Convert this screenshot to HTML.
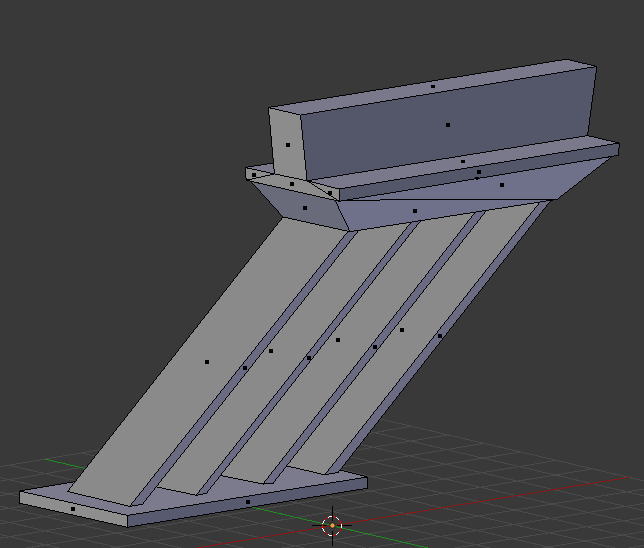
<!DOCTYPE html>
<html><head><meta charset="utf-8"><title>Blender viewport</title>
<style>
html,body{margin:0;padding:0;background:#393939;overflow:hidden;font-family:"Liberation Sans",sans-serif;}
svg{display:block}
</style></head><body>
<svg width="644" height="548" viewBox="0 0 644 548" shape-rendering="crispEdges">
<rect width="644" height="548" fill="#393939"/>
<g stroke-width="1" fill="none">
<line x1="-239.7" y1="507.5" x2="326.5" y2="637.3" stroke="#4a4a4a"/>
<line x1="-239.7" y1="507.5" x2="338.6" y2="409.2" stroke="#4a4a4a"/>
<line x1="-204.6" y1="501.5" x2="362.2" y2="631.7" stroke="#4a4a4a"/>
<line x1="-203.9" y1="515.7" x2="375.1" y2="417.8" stroke="#4a4a4a"/>
<line x1="-169.4" y1="495.5" x2="398.0" y2="626.0" stroke="#4a4a4a"/>
<line x1="-168.1" y1="523.9" x2="411.5" y2="426.3" stroke="#4a4a4a"/>
<line x1="-134.0" y1="489.5" x2="434.0" y2="620.3" stroke="#4a4a4a"/>
<line x1="-132.4" y1="532.1" x2="447.8" y2="434.8" stroke="#4a4a4a"/>
<line x1="-98.5" y1="483.5" x2="470.1" y2="614.6" stroke="#4a4a4a"/>
<line x1="-96.8" y1="540.2" x2="484.1" y2="443.4" stroke="#4a4a4a"/>
<line x1="-62.9" y1="477.4" x2="506.4" y2="608.9" stroke="#4a4a4a"/>
<line x1="-61.2" y1="548.4" x2="520.3" y2="451.9" stroke="#4a4a4a"/>
<line x1="-27.1" y1="471.3" x2="542.8" y2="603.2" stroke="#4a4a4a"/>
<line x1="-25.6" y1="556.6" x2="556.5" y2="460.4" stroke="#4a4a4a"/>
<line x1="8.8" y1="465.2" x2="579.3" y2="597.4" stroke="#4a4a4a"/>
<line x1="9.9" y1="564.7" x2="592.6" y2="468.8" stroke="#4a4a4a"/>
<line x1="81.1" y1="452.9" x2="652.8" y2="585.8" stroke="#4a4a4a"/>
<line x1="80.6" y1="580.9" x2="664.6" y2="485.7" stroke="#4a4a4a"/>
<line x1="117.5" y1="446.8" x2="689.8" y2="579.9" stroke="#4a4a4a"/>
<line x1="115.9" y1="589.0" x2="700.5" y2="494.2" stroke="#4a4a4a"/>
<line x1="154.0" y1="440.6" x2="726.9" y2="574.1" stroke="#4a4a4a"/>
<line x1="151.2" y1="597.1" x2="736.3" y2="502.6" stroke="#4a4a4a"/>
<line x1="190.6" y1="434.3" x2="764.1" y2="568.2" stroke="#4a4a4a"/>
<line x1="186.3" y1="605.2" x2="772.1" y2="511.0" stroke="#4a4a4a"/>
<line x1="227.4" y1="428.1" x2="801.5" y2="562.3" stroke="#4a4a4a"/>
<line x1="221.5" y1="613.2" x2="807.8" y2="519.4" stroke="#4a4a4a"/>
<line x1="264.3" y1="421.8" x2="839.1" y2="556.4" stroke="#4a4a4a"/>
<line x1="256.5" y1="621.3" x2="843.5" y2="527.8" stroke="#4a4a4a"/>
<line x1="301.4" y1="415.5" x2="876.8" y2="550.4" stroke="#4a4a4a"/>
<line x1="291.5" y1="629.3" x2="879.1" y2="536.1" stroke="#4a4a4a"/>
<line x1="338.6" y1="409.2" x2="914.6" y2="544.5" stroke="#4a4a4a"/>
<line x1="326.5" y1="637.3" x2="914.6" y2="544.5" stroke="#4a4a4a"/>
<line x1="44.9" y1="459.1" x2="616.0" y2="591.6" stroke="#1f8a1f"/>
<line x1="45.3" y1="572.8" x2="628.6" y2="477.3" stroke="#8c1818"/>
</g>
<g stroke="#000" stroke-width="1" fill="none">
<polygon points="19.50,491.00 127.50,515.40 367.50,477.00 262.00,450.30" fill="#7b7b8d" stroke="none"/>
<path d="M258 450.5h7M252 451.5h6M265 451.5h4M246 452.5h6M269 452.5h4M240 453.5h6M273 453.5h4M234 454.5h6M277 454.5h4M228 455.5h6M281 455.5h4M222 456.5h6M285 456.5h3M216 457.5h6M288 457.5h4M210 458.5h6M292 458.5h4M204 459.5h6M296 459.5h4M198 460.5h6M300 460.5h4M192 461.5h6M304 461.5h4M186 462.5h6M308 462.5h4M180 463.5h6M312 463.5h4M174 464.5h6M316 464.5h4M168 465.5h6M320 465.5h4M162 466.5h6M324 466.5h4M157 467.5h5M328 467.5h4M151 468.5h6M332 468.5h4M145 469.5h6M336 469.5h4M139 470.5h6M340 470.5h4M133 471.5h6M344 471.5h4M127 472.5h6M348 472.5h4M121 473.5h6M352 473.5h4M115 474.5h6M356 474.5h4M109 475.5h6M360 475.5h4M103 476.5h6M364 476.5h3M97 477.5h6M361 477.5h7M91 478.5h6M355 478.5h6M85 479.5h6M349 479.5h6M79 480.5h6M343 480.5h6M73 481.5h6M336 481.5h7M67 482.5h6M330 482.5h6M61 483.5h6M324 483.5h6M55 484.5h6M318 484.5h6M49 485.5h6M311 485.5h7M43 486.5h6M305 486.5h6M37 487.5h6M299 487.5h6M31 488.5h6M293 488.5h6M25 489.5h6M286 489.5h7M20 490.5h5M280 490.5h6M19 491.5h5M274 491.5h6M24 492.5h4M268 492.5h6M28 493.5h5M261 493.5h7M33 494.5h4M255 494.5h6M37 495.5h5M249 495.5h6M42 496.5h4M243 496.5h6M46 497.5h4M236 497.5h7M50 498.5h5M230 498.5h6M55 499.5h4M224 499.5h6M59 500.5h5M218 500.5h6M64 501.5h4M211 501.5h7M68 502.5h5M205 502.5h6M73 503.5h4M199 503.5h6M77 504.5h4M193 504.5h6M81 505.5h5M186 505.5h7M86 506.5h4M180 506.5h6M90 507.5h5M174 507.5h6M95 508.5h4M168 508.5h6M99 509.5h5M161 509.5h7M104 510.5h4M155 510.5h6M108 511.5h4M149 511.5h6M112 512.5h5M143 512.5h6M117 513.5h4M136 513.5h7M121 514.5h5M130 514.5h6M126 515.5h4"/>
<polygon points="19.50,491.00 127.50,515.40 127.50,527.25 19.70,503.20" fill="#8e8e8e" stroke="none"/>
<path d="M19 491.5h5M19 492.5h1M24 492.5h4M19 493.5h1M28 493.5h5M19 494.5h1M33 494.5h4M19 495.5h1M37 495.5h5M19 496.5h1M42 496.5h4M19 497.5h1M46 497.5h4M19 498.5h1M50 498.5h5M19 499.5h1M55 499.5h4M19 500.5h1M59 500.5h5M19 501.5h1M64 501.5h4M19 502.5h1M68 502.5h5M19 503.5h4M73 503.5h4M23 504.5h5M77 504.5h4M28 505.5h4M81 505.5h5M32 506.5h5M86 506.5h4M37 507.5h4M90 507.5h5M41 508.5h5M95 508.5h4M46 509.5h4M99 509.5h5M50 510.5h5M104 510.5h4M55 511.5h4M108 511.5h4M59 512.5h5M112 512.5h5M64 513.5h4M117 513.5h4M68 514.5h5M121 514.5h5M73 515.5h4M126 515.5h2M77 516.5h5M127 516.5h1M82 517.5h4M127 517.5h1M86 518.5h5M127 518.5h1M91 519.5h4M127 519.5h1M95 520.5h4M127 520.5h1M99 521.5h5M127 521.5h1M104 522.5h4M127 522.5h1M108 523.5h5M127 523.5h1M113 524.5h4M127 524.5h1M117 525.5h5M127 525.5h1M122 526.5h4M127 526.5h1M126 527.5h2"/>
<polygon points="127.50,515.40 367.50,477.00 367.50,488.20 127.50,527.25" fill="#585b6f" stroke="none"/>
<path d="M361 477.5h7M355 478.5h6M367 478.5h1M349 479.5h6M367 479.5h1M343 480.5h6M367 480.5h1M336 481.5h7M367 481.5h1M330 482.5h6M367 482.5h1M324 483.5h6M367 483.5h1M318 484.5h6M367 484.5h1M311 485.5h7M367 485.5h1M305 486.5h6M367 486.5h1M299 487.5h6M367 487.5h1M293 488.5h6M363 488.5h5M286 489.5h7M356 489.5h7M280 490.5h6M350 490.5h6M274 491.5h6M344 491.5h6M268 492.5h6M338 492.5h6M261 493.5h7M332 493.5h6M255 494.5h6M326 494.5h6M249 495.5h6M320 495.5h6M243 496.5h6M313 496.5h7M236 497.5h7M307 497.5h6M230 498.5h6M301 498.5h6M224 499.5h6M295 499.5h6M218 500.5h6M289 500.5h6M211 501.5h7M283 501.5h6M205 502.5h6M277 502.5h6M199 503.5h6M270 503.5h7M193 504.5h6M264 504.5h6M186 505.5h7M258 505.5h6M180 506.5h6M252 506.5h6M174 507.5h6M246 507.5h6M168 508.5h6M240 508.5h6M161 509.5h7M234 509.5h6M155 510.5h6M227 510.5h7M149 511.5h6M221 511.5h6M143 512.5h6M215 512.5h6M136 513.5h7M209 513.5h6M130 514.5h6M203 514.5h6M127 515.5h3M197 515.5h6M127 516.5h1M190 516.5h7M127 517.5h1M184 517.5h6M127 518.5h1M178 518.5h6M127 519.5h1M172 519.5h6M127 520.5h1M166 520.5h6M127 521.5h1M160 521.5h6M127 522.5h1M154 522.5h6M127 523.5h1M147 523.5h7M127 524.5h1M141 524.5h6M127 525.5h1M135 525.5h6M127 526.5h1M129 526.5h6M127 527.5h2"/>
<polygon points="483.44,208.33 542.48,198.86 324.80,474.80 285.00,465.50" fill="#8a8a8a" stroke="none"/>
<path d="M542 198.5h1M535 199.5h7M529 200.5h6M541 200.5h1M523 201.5h6M540 201.5h1M517 202.5h6M539 202.5h1M510 203.5h7M538 203.5h1M504 204.5h6M538 204.5h1M498 205.5h6M537 205.5h1M492 206.5h6M536 206.5h1M486 207.5h6M535 207.5h1M483 208.5h3M534 208.5h1M482 209.5h1M534 209.5h1M481 210.5h1M533 210.5h1M481 211.5h1M532 211.5h1M480 212.5h1M531 212.5h1M479 213.5h1M530 213.5h1M478 214.5h1M530 214.5h1M477 215.5h1M529 215.5h1M477 216.5h1M528 216.5h1M476 217.5h1M527 217.5h1M475 218.5h1M526 218.5h1M474 219.5h1M526 219.5h1M474 220.5h1M525 220.5h1M473 221.5h1M524 221.5h1M472 222.5h1M523 222.5h1M471 223.5h1M523 223.5h1M470 224.5h1M522 224.5h1M470 225.5h1M521 225.5h1M469 226.5h1M520 226.5h1M468 227.5h1M519 227.5h1M467 228.5h1M519 228.5h1M467 229.5h1M518 229.5h1M466 230.5h1M517 230.5h1M465 231.5h1M516 231.5h1M464 232.5h1M515 232.5h1M464 233.5h1M515 233.5h1M463 234.5h1M514 234.5h1M462 235.5h1M513 235.5h1M461 236.5h1M512 236.5h1M460 237.5h1M511 237.5h1M460 238.5h1M511 238.5h1M459 239.5h1M510 239.5h1M458 240.5h1M509 240.5h1M457 241.5h1M508 241.5h1M457 242.5h1M508 242.5h1M456 243.5h1M507 243.5h1M455 244.5h1M506 244.5h1M454 245.5h1M505 245.5h1M453 246.5h1M504 246.5h1M453 247.5h1M504 247.5h1M452 248.5h1M503 248.5h1M451 249.5h1M502 249.5h1M450 250.5h1M501 250.5h1M450 251.5h1M500 251.5h1M449 252.5h1M500 252.5h1M448 253.5h1M499 253.5h1M447 254.5h1M498 254.5h1M447 255.5h1M497 255.5h1M446 256.5h1M497 256.5h1M445 257.5h1M496 257.5h1M444 258.5h1M495 258.5h1M443 259.5h1M494 259.5h1M443 260.5h1M493 260.5h1M442 261.5h1M493 261.5h1M441 262.5h1M492 262.5h1M440 263.5h1M491 263.5h1M440 264.5h1M490 264.5h1M439 265.5h1M489 265.5h1M438 266.5h1M489 266.5h1M437 267.5h1M488 267.5h1M437 268.5h1M487 268.5h1M436 269.5h1M486 269.5h1M435 270.5h1M485 270.5h1M434 271.5h1M485 271.5h1M433 272.5h1M484 272.5h1M433 273.5h1M483 273.5h1M432 274.5h1M482 274.5h1M431 275.5h1M482 275.5h1M430 276.5h1M481 276.5h1M430 277.5h1M480 277.5h1M429 278.5h1M479 278.5h1M428 279.5h1M478 279.5h1M427 280.5h1M478 280.5h1M426 281.5h1M477 281.5h1M426 282.5h1M476 282.5h1M425 283.5h1M475 283.5h1M424 284.5h1M474 284.5h1M423 285.5h1M474 285.5h1M423 286.5h1M473 286.5h1M422 287.5h1M472 287.5h1M421 288.5h1M471 288.5h1M420 289.5h1M470 289.5h1M420 290.5h1M470 290.5h1M419 291.5h1M469 291.5h1M418 292.5h1M468 292.5h1M417 293.5h1M467 293.5h1M416 294.5h1M467 294.5h1M416 295.5h1M466 295.5h1M415 296.5h1M465 296.5h1M414 297.5h1M464 297.5h1M413 298.5h1M463 298.5h1M413 299.5h1M463 299.5h1M412 300.5h1M462 300.5h1M411 301.5h1M461 301.5h1M410 302.5h1M460 302.5h1M410 303.5h1M459 303.5h1M409 304.5h1M459 304.5h1M408 305.5h1M458 305.5h1M407 306.5h1M457 306.5h1M406 307.5h1M456 307.5h1M406 308.5h1M455 308.5h1M405 309.5h1M455 309.5h1M404 310.5h1M454 310.5h1M403 311.5h1M453 311.5h1M403 312.5h1M452 312.5h1M402 313.5h1M452 313.5h1M401 314.5h1M451 314.5h1M400 315.5h1M450 315.5h1M399 316.5h1M449 316.5h1M399 317.5h1M448 317.5h1M398 318.5h1M448 318.5h1M397 319.5h1M447 319.5h1M396 320.5h1M446 320.5h1M396 321.5h1M445 321.5h1M395 322.5h1M444 322.5h1M394 323.5h1M444 323.5h1M393 324.5h1M443 324.5h1M393 325.5h1M442 325.5h1M392 326.5h1M441 326.5h1M391 327.5h1M440 327.5h1M390 328.5h1M440 328.5h1M389 329.5h1M439 329.5h1M389 330.5h1M438 330.5h1M388 331.5h1M437 331.5h1M387 332.5h1M437 332.5h1M386 333.5h1M436 333.5h1M386 334.5h1M435 334.5h1M385 335.5h1M434 335.5h1M384 336.5h1M433 336.5h1M383 337.5h1M433 337.5h1M383 338.5h1M432 338.5h1M382 339.5h1M431 339.5h1M381 340.5h1M430 340.5h1M380 341.5h1M429 341.5h1M379 342.5h1M429 342.5h1M379 343.5h1M428 343.5h1M378 344.5h1M427 344.5h1M377 345.5h1M426 345.5h1M376 346.5h1M426 346.5h1M376 347.5h1M425 347.5h1M375 348.5h1M424 348.5h1M374 349.5h1M423 349.5h1M373 350.5h1M422 350.5h1M372 351.5h1M422 351.5h1M372 352.5h1M421 352.5h1M371 353.5h1M420 353.5h1M370 354.5h1M419 354.5h1M369 355.5h1M418 355.5h1M369 356.5h1M418 356.5h1M368 357.5h1M417 357.5h1M367 358.5h1M416 358.5h1M366 359.5h1M415 359.5h1M366 360.5h1M414 360.5h1M365 361.5h1M414 361.5h1M364 362.5h1M413 362.5h1M363 363.5h1M412 363.5h1M362 364.5h1M411 364.5h1M362 365.5h1M411 365.5h1M361 366.5h1M410 366.5h1M360 367.5h1M409 367.5h1M359 368.5h1M408 368.5h1M359 369.5h1M407 369.5h1M358 370.5h1M407 370.5h1M357 371.5h1M406 371.5h1M356 372.5h1M405 372.5h1M355 373.5h1M404 373.5h1M355 374.5h1M403 374.5h1M354 375.5h1M403 375.5h1M353 376.5h1M402 376.5h1M352 377.5h1M401 377.5h1M352 378.5h1M400 378.5h1M351 379.5h1M399 379.5h1M350 380.5h1M399 380.5h1M349 381.5h1M398 381.5h1M349 382.5h1M397 382.5h1M348 383.5h1M396 383.5h1M347 384.5h1M396 384.5h1M346 385.5h1M395 385.5h1M345 386.5h1M394 386.5h1M345 387.5h1M393 387.5h1M344 388.5h1M392 388.5h1M343 389.5h1M392 389.5h1M342 390.5h1M391 390.5h1M342 391.5h1M390 391.5h1M341 392.5h1M389 392.5h1M340 393.5h1M388 393.5h1M339 394.5h1M388 394.5h1M339 395.5h1M387 395.5h1M338 396.5h1M386 396.5h1M337 397.5h1M385 397.5h1M336 398.5h1M384 398.5h1M335 399.5h1M384 399.5h1M335 400.5h1M383 400.5h1M334 401.5h1M382 401.5h1M333 402.5h1M381 402.5h1M332 403.5h1M381 403.5h1M332 404.5h1M380 404.5h1M331 405.5h1M379 405.5h1M330 406.5h1M378 406.5h1M329 407.5h1M377 407.5h1M328 408.5h1M377 408.5h1M328 409.5h1M376 409.5h1M327 410.5h1M375 410.5h1M326 411.5h1M374 411.5h1M325 412.5h1M373 412.5h1M325 413.5h1M373 413.5h1M324 414.5h1M372 414.5h1M323 415.5h1M371 415.5h1M322 416.5h1M370 416.5h1M322 417.5h1M370 417.5h1M321 418.5h1M369 418.5h1M320 419.5h1M368 419.5h1M319 420.5h1M367 420.5h1M318 421.5h1M366 421.5h1M318 422.5h1M366 422.5h1M317 423.5h1M365 423.5h1M316 424.5h1M364 424.5h1M315 425.5h1M363 425.5h1M315 426.5h1M362 426.5h1M314 427.5h1M362 427.5h1M313 428.5h1M361 428.5h1M312 429.5h1M360 429.5h1M312 430.5h1M359 430.5h1M311 431.5h1M358 431.5h1M310 432.5h1M358 432.5h1M309 433.5h1M357 433.5h1M308 434.5h1M356 434.5h1M308 435.5h1M355 435.5h1M307 436.5h1M355 436.5h1M306 437.5h1M354 437.5h1M305 438.5h1M353 438.5h1M305 439.5h1M352 439.5h1M304 440.5h1M351 440.5h1M303 441.5h1M351 441.5h1M302 442.5h1M350 442.5h1M301 443.5h1M349 443.5h1M301 444.5h1M348 444.5h1M300 445.5h1M347 445.5h1M299 446.5h1M347 446.5h1M298 447.5h1M346 447.5h1M298 448.5h1M345 448.5h1M297 449.5h1M344 449.5h1M296 450.5h1M343 450.5h1M295 451.5h1M343 451.5h1M295 452.5h1M342 452.5h1M294 453.5h1M341 453.5h1M293 454.5h1M340 454.5h1M292 455.5h1M340 455.5h1M291 456.5h1M339 456.5h1M291 457.5h1M338 457.5h1M290 458.5h1M337 458.5h1M289 459.5h1M336 459.5h1M288 460.5h1M336 460.5h1M288 461.5h1M335 461.5h1M287 462.5h1M334 462.5h1M286 463.5h1M333 463.5h1M285 464.5h1M332 464.5h1M285 465.5h2M332 465.5h1M287 466.5h4M331 466.5h1M291 467.5h5M330 467.5h1M296 468.5h4M329 468.5h1M300 469.5h4M328 469.5h1M304 470.5h5M328 470.5h1M309 471.5h4M327 471.5h1M313 472.5h4M326 472.5h1M317 473.5h4M325 473.5h1M321 474.5h5"/>
<polygon points="542.48,198.86 553.66,196.85 338.30,472.30 324.80,474.80" fill="#6a6b83" stroke="none"/>
<path d="M553 196.5h1M547 197.5h7M542 198.5h5M552 198.5h1M541 199.5h1M551 199.5h1M541 200.5h1M550 200.5h1M540 201.5h1M550 201.5h1M539 202.5h1M549 202.5h1M538 203.5h1M548 203.5h1M538 204.5h1M547 204.5h1M537 205.5h1M546 205.5h1M536 206.5h1M546 206.5h1M535 207.5h1M545 207.5h1M534 208.5h1M544 208.5h1M534 209.5h1M543 209.5h1M533 210.5h1M542 210.5h1M532 211.5h1M542 211.5h1M531 212.5h1M541 212.5h1M530 213.5h1M540 213.5h1M530 214.5h1M539 214.5h1M529 215.5h1M539 215.5h1M528 216.5h1M538 216.5h1M527 217.5h1M537 217.5h1M526 218.5h1M536 218.5h1M526 219.5h1M535 219.5h1M525 220.5h1M535 220.5h1M524 221.5h1M534 221.5h1M523 222.5h1M533 222.5h1M523 223.5h1M532 223.5h1M522 224.5h1M532 224.5h1M521 225.5h1M531 225.5h1M520 226.5h1M530 226.5h1M519 227.5h1M529 227.5h1M519 228.5h1M528 228.5h1M518 229.5h1M528 229.5h1M517 230.5h1M527 230.5h1M516 231.5h1M526 231.5h1M515 232.5h1M525 232.5h1M515 233.5h1M525 233.5h1M514 234.5h1M524 234.5h1M513 235.5h1M523 235.5h1M512 236.5h1M522 236.5h1M511 237.5h1M521 237.5h1M511 238.5h1M521 238.5h1M510 239.5h1M520 239.5h1M509 240.5h1M519 240.5h1M508 241.5h1M518 241.5h1M508 242.5h1M517 242.5h1M507 243.5h1M517 243.5h1M506 244.5h1M516 244.5h1M505 245.5h1M515 245.5h1M504 246.5h1M514 246.5h1M504 247.5h1M514 247.5h1M503 248.5h1M513 248.5h1M502 249.5h1M512 249.5h1M501 250.5h1M511 250.5h1M500 251.5h1M510 251.5h1M500 252.5h1M510 252.5h1M499 253.5h1M509 253.5h1M498 254.5h1M508 254.5h1M497 255.5h1M507 255.5h1M497 256.5h1M507 256.5h1M496 257.5h1M506 257.5h1M495 258.5h1M505 258.5h1M494 259.5h1M504 259.5h1M493 260.5h1M503 260.5h1M493 261.5h1M503 261.5h1M492 262.5h1M502 262.5h1M491 263.5h1M501 263.5h1M490 264.5h1M500 264.5h1M489 265.5h1M499 265.5h1M489 266.5h1M499 266.5h1M488 267.5h1M498 267.5h1M487 268.5h1M497 268.5h1M486 269.5h1M496 269.5h1M485 270.5h1M496 270.5h1M485 271.5h1M495 271.5h1M484 272.5h1M494 272.5h1M483 273.5h1M493 273.5h1M482 274.5h1M492 274.5h1M482 275.5h1M492 275.5h1M481 276.5h1M491 276.5h1M480 277.5h1M490 277.5h1M479 278.5h1M489 278.5h1M478 279.5h1M489 279.5h1M478 280.5h1M488 280.5h1M477 281.5h1M487 281.5h1M476 282.5h1M486 282.5h1M475 283.5h1M485 283.5h1M474 284.5h1M485 284.5h1M474 285.5h1M484 285.5h1M473 286.5h1M483 286.5h1M472 287.5h1M482 287.5h1M471 288.5h1M482 288.5h1M470 289.5h1M481 289.5h1M470 290.5h1M480 290.5h1M469 291.5h1M479 291.5h1M468 292.5h1M478 292.5h1M467 293.5h1M478 293.5h1M467 294.5h1M477 294.5h1M466 295.5h1M476 295.5h1M465 296.5h1M475 296.5h1M464 297.5h1M474 297.5h1M463 298.5h1M474 298.5h1M463 299.5h1M473 299.5h1M462 300.5h1M472 300.5h1M461 301.5h1M471 301.5h1M460 302.5h1M471 302.5h1M459 303.5h1M470 303.5h1M459 304.5h1M469 304.5h1M458 305.5h1M468 305.5h1M457 306.5h1M467 306.5h1M456 307.5h1M467 307.5h1M455 308.5h1M466 308.5h1M455 309.5h1M465 309.5h1M454 310.5h1M464 310.5h1M453 311.5h1M464 311.5h1M452 312.5h1M463 312.5h1M452 313.5h1M462 313.5h1M451 314.5h1M461 314.5h1M450 315.5h1M460 315.5h1M449 316.5h1M460 316.5h1M448 317.5h1M459 317.5h1M448 318.5h1M458 318.5h1M447 319.5h1M457 319.5h1M446 320.5h1M456 320.5h1M445 321.5h1M456 321.5h1M444 322.5h1M455 322.5h1M444 323.5h1M454 323.5h1M443 324.5h1M453 324.5h1M442 325.5h1M453 325.5h1M441 326.5h1M452 326.5h1M440 327.5h1M451 327.5h1M440 328.5h1M450 328.5h1M439 329.5h1M449 329.5h1M438 330.5h1M449 330.5h1M437 331.5h1M448 331.5h1M437 332.5h1M447 332.5h1M436 333.5h1M446 333.5h1M435 334.5h1M446 334.5h1M434 335.5h1M445 335.5h1M433 336.5h1M444 336.5h1M433 337.5h1M443 337.5h1M432 338.5h1M442 338.5h1M431 339.5h1M442 339.5h1M430 340.5h1M441 340.5h1M429 341.5h1M440 341.5h1M429 342.5h1M439 342.5h1M428 343.5h1M439 343.5h1M427 344.5h1M438 344.5h1M426 345.5h1M437 345.5h1M426 346.5h1M436 346.5h1M425 347.5h1M435 347.5h1M424 348.5h1M435 348.5h1M423 349.5h1M434 349.5h1M422 350.5h1M433 350.5h1M422 351.5h1M432 351.5h1M421 352.5h1M431 352.5h1M420 353.5h1M431 353.5h1M419 354.5h1M430 354.5h1M418 355.5h1M429 355.5h1M418 356.5h1M428 356.5h1M417 357.5h1M428 357.5h1M416 358.5h1M427 358.5h1M415 359.5h1M426 359.5h1M414 360.5h1M425 360.5h1M414 361.5h1M424 361.5h1M413 362.5h1M424 362.5h1M412 363.5h1M423 363.5h1M411 364.5h1M422 364.5h1M411 365.5h1M421 365.5h1M410 366.5h1M421 366.5h1M409 367.5h1M420 367.5h1M408 368.5h1M419 368.5h1M407 369.5h1M418 369.5h1M407 370.5h1M417 370.5h1M406 371.5h1M417 371.5h1M405 372.5h1M416 372.5h1M404 373.5h1M415 373.5h1M403 374.5h1M414 374.5h1M403 375.5h1M413 375.5h1M402 376.5h1M413 376.5h1M401 377.5h1M412 377.5h1M400 378.5h1M411 378.5h1M399 379.5h1M410 379.5h1M399 380.5h1M410 380.5h1M398 381.5h1M409 381.5h1M397 382.5h1M408 382.5h1M396 383.5h1M407 383.5h1M396 384.5h1M406 384.5h1M395 385.5h1M406 385.5h1M394 386.5h1M405 386.5h1M393 387.5h1M404 387.5h1M392 388.5h1M403 388.5h1M392 389.5h1M403 389.5h1M391 390.5h1M402 390.5h1M390 391.5h1M401 391.5h1M389 392.5h1M400 392.5h1M388 393.5h1M399 393.5h1M388 394.5h1M399 394.5h1M387 395.5h1M398 395.5h1M386 396.5h1M397 396.5h1M385 397.5h1M396 397.5h1M384 398.5h1M396 398.5h1M384 399.5h1M395 399.5h1M383 400.5h1M394 400.5h1M382 401.5h1M393 401.5h1M381 402.5h1M392 402.5h1M381 403.5h1M392 403.5h1M380 404.5h1M391 404.5h1M379 405.5h1M390 405.5h1M378 406.5h1M389 406.5h1M377 407.5h1M388 407.5h1M377 408.5h1M388 408.5h1M376 409.5h1M387 409.5h1M375 410.5h1M386 410.5h1M374 411.5h1M385 411.5h1M373 412.5h1M385 412.5h1M373 413.5h1M384 413.5h1M372 414.5h1M383 414.5h1M371 415.5h1M382 415.5h1M370 416.5h1M381 416.5h1M370 417.5h1M381 417.5h1M369 418.5h1M380 418.5h1M368 419.5h1M379 419.5h1M367 420.5h1M378 420.5h1M366 421.5h1M378 421.5h1M366 422.5h1M377 422.5h1M365 423.5h1M376 423.5h1M364 424.5h1M375 424.5h1M363 425.5h1M374 425.5h1M362 426.5h1M374 426.5h1M362 427.5h1M373 427.5h1M361 428.5h1M372 428.5h1M360 429.5h1M371 429.5h1M359 430.5h1M370 430.5h1M358 431.5h1M370 431.5h1M358 432.5h1M369 432.5h1M357 433.5h1M368 433.5h1M356 434.5h1M367 434.5h1M355 435.5h1M367 435.5h1M355 436.5h1M366 436.5h1M354 437.5h1M365 437.5h1M353 438.5h1M364 438.5h1M352 439.5h1M363 439.5h1M351 440.5h1M363 440.5h1M351 441.5h1M362 441.5h1M350 442.5h1M361 442.5h1M349 443.5h1M360 443.5h1M348 444.5h1M360 444.5h1M347 445.5h1M359 445.5h1M347 446.5h1M358 446.5h1M346 447.5h1M357 447.5h1M345 448.5h1M356 448.5h1M344 449.5h1M356 449.5h1M343 450.5h1M355 450.5h1M343 451.5h1M354 451.5h1M342 452.5h1M353 452.5h1M341 453.5h1M352 453.5h1M340 454.5h1M352 454.5h1M340 455.5h1M351 455.5h1M339 456.5h1M350 456.5h1M338 457.5h1M349 457.5h1M337 458.5h1M349 458.5h1M336 459.5h1M348 459.5h1M336 460.5h1M347 460.5h1M335 461.5h1M346 461.5h1M334 462.5h1M345 462.5h1M333 463.5h1M345 463.5h1M332 464.5h1M344 464.5h1M332 465.5h1M343 465.5h1M331 466.5h1M342 466.5h1M330 467.5h1M342 467.5h1M329 468.5h1M341 468.5h1M328 469.5h1M340 469.5h1M328 470.5h1M339 470.5h1M327 471.5h1M338 471.5h1M326 472.5h1M335 472.5h4M325 473.5h1M329 473.5h6M324 474.5h5"/>
<polygon points="417.46,219.34 477.46,209.35 263.00,484.00 218.50,475.00" fill="#8a8a8a" stroke="none"/>
<path d="M474 209.5h4M468 210.5h6M476 210.5h1M462 211.5h6M475 211.5h1M456 212.5h6M475 212.5h1M450 213.5h6M474 213.5h1M444 214.5h6M473 214.5h1M438 215.5h6M472 215.5h1M432 216.5h6M471 216.5h1M426 217.5h6M471 217.5h1M420 218.5h6M470 218.5h1M417 219.5h3M469 219.5h1M416 220.5h1M468 220.5h1M415 221.5h1M467 221.5h1M415 222.5h1M467 222.5h1M414 223.5h1M466 223.5h1M413 224.5h1M465 224.5h1M412 225.5h1M464 225.5h1M411 226.5h1M464 226.5h1M411 227.5h1M463 227.5h1M410 228.5h1M462 228.5h1M409 229.5h1M461 229.5h1M408 230.5h1M460 230.5h1M407 231.5h1M460 231.5h1M407 232.5h1M459 232.5h1M406 233.5h1M458 233.5h1M405 234.5h1M457 234.5h1M404 235.5h1M457 235.5h1M404 236.5h1M456 236.5h1M403 237.5h1M455 237.5h1M402 238.5h1M454 238.5h1M401 239.5h1M453 239.5h1M400 240.5h1M453 240.5h1M400 241.5h1M452 241.5h1M399 242.5h1M451 242.5h1M398 243.5h1M450 243.5h1M397 244.5h1M450 244.5h1M397 245.5h1M449 245.5h1M396 246.5h1M448 246.5h1M395 247.5h1M447 247.5h1M394 248.5h1M446 248.5h1M393 249.5h1M446 249.5h1M393 250.5h1M445 250.5h1M392 251.5h1M444 251.5h1M391 252.5h1M443 252.5h1M390 253.5h1M442 253.5h1M390 254.5h1M442 254.5h1M389 255.5h1M441 255.5h1M388 256.5h1M440 256.5h1M387 257.5h1M439 257.5h1M386 258.5h1M439 258.5h1M386 259.5h1M438 259.5h1M385 260.5h1M437 260.5h1M384 261.5h1M436 261.5h1M383 262.5h1M435 262.5h1M383 263.5h1M435 263.5h1M382 264.5h1M434 264.5h1M381 265.5h1M433 265.5h1M380 266.5h1M432 266.5h1M379 267.5h1M432 267.5h1M379 268.5h1M431 268.5h1M378 269.5h1M430 269.5h1M377 270.5h1M429 270.5h1M376 271.5h1M428 271.5h1M376 272.5h1M428 272.5h1M375 273.5h1M427 273.5h1M374 274.5h1M426 274.5h1M373 275.5h1M425 275.5h1M372 276.5h1M425 276.5h1M372 277.5h1M424 277.5h1M371 278.5h1M423 278.5h1M370 279.5h1M422 279.5h1M369 280.5h1M421 280.5h1M369 281.5h1M421 281.5h1M368 282.5h1M420 282.5h1M367 283.5h1M419 283.5h1M366 284.5h1M418 284.5h1M365 285.5h1M417 285.5h1M365 286.5h1M417 286.5h1M364 287.5h1M416 287.5h1M363 288.5h1M415 288.5h1M362 289.5h1M414 289.5h1M362 290.5h1M414 290.5h1M361 291.5h1M413 291.5h1M360 292.5h1M412 292.5h1M359 293.5h1M411 293.5h1M358 294.5h1M410 294.5h1M358 295.5h1M410 295.5h1M357 296.5h1M409 296.5h1M356 297.5h1M408 297.5h1M355 298.5h1M407 298.5h1M355 299.5h1M407 299.5h1M354 300.5h1M406 300.5h1M353 301.5h1M405 301.5h1M352 302.5h1M404 302.5h1M351 303.5h1M403 303.5h1M351 304.5h1M403 304.5h1M350 305.5h1M402 305.5h1M349 306.5h1M401 306.5h1M348 307.5h1M400 307.5h1M348 308.5h1M400 308.5h1M347 309.5h1M399 309.5h1M346 310.5h1M398 310.5h1M345 311.5h1M397 311.5h1M344 312.5h1M396 312.5h1M344 313.5h1M396 313.5h1M343 314.5h1M395 314.5h1M342 315.5h1M394 315.5h1M341 316.5h1M393 316.5h1M341 317.5h1M393 317.5h1M340 318.5h1M392 318.5h1M339 319.5h1M391 319.5h1M338 320.5h1M390 320.5h1M337 321.5h1M389 321.5h1M337 322.5h1M389 322.5h1M336 323.5h1M388 323.5h1M335 324.5h1M387 324.5h1M334 325.5h1M386 325.5h1M334 326.5h1M385 326.5h1M333 327.5h1M385 327.5h1M332 328.5h1M384 328.5h1M331 329.5h1M383 329.5h1M330 330.5h1M382 330.5h1M330 331.5h1M382 331.5h1M329 332.5h1M381 332.5h1M328 333.5h1M380 333.5h1M327 334.5h1M379 334.5h1M327 335.5h1M378 335.5h1M326 336.5h1M378 336.5h1M325 337.5h1M377 337.5h1M324 338.5h1M376 338.5h1M323 339.5h1M375 339.5h1M323 340.5h1M375 340.5h1M322 341.5h1M374 341.5h1M321 342.5h1M373 342.5h1M320 343.5h1M372 343.5h1M320 344.5h1M371 344.5h1M319 345.5h1M371 345.5h1M318 346.5h1M370 346.5h1M317 347.5h1M369 347.5h1M316 348.5h1M368 348.5h1M316 349.5h1M368 349.5h1M315 350.5h1M367 350.5h1M314 351.5h1M366 351.5h1M313 352.5h1M365 352.5h1M313 353.5h1M364 353.5h1M312 354.5h1M364 354.5h1M311 355.5h1M363 355.5h1M310 356.5h1M362 356.5h1M309 357.5h1M361 357.5h1M309 358.5h1M360 358.5h1M308 359.5h1M360 359.5h1M307 360.5h1M359 360.5h1M306 361.5h1M358 361.5h1M306 362.5h1M357 362.5h1M305 363.5h1M357 363.5h1M304 364.5h1M356 364.5h1M303 365.5h1M355 365.5h1M302 366.5h1M354 366.5h1M302 367.5h1M353 367.5h1M301 368.5h1M353 368.5h1M300 369.5h1M352 369.5h1M299 370.5h1M351 370.5h1M299 371.5h1M350 371.5h1M298 372.5h1M350 372.5h1M297 373.5h1M349 373.5h1M296 374.5h1M348 374.5h1M295 375.5h1M347 375.5h1M295 376.5h1M346 376.5h1M294 377.5h1M346 377.5h1M293 378.5h1M345 378.5h1M292 379.5h1M344 379.5h1M292 380.5h1M343 380.5h1M291 381.5h1M343 381.5h1M290 382.5h1M342 382.5h1M289 383.5h1M341 383.5h1M288 384.5h1M340 384.5h1M288 385.5h1M339 385.5h1M287 386.5h1M339 386.5h1M286 387.5h1M338 387.5h1M285 388.5h1M337 388.5h1M285 389.5h1M336 389.5h1M284 390.5h1M336 390.5h1M283 391.5h1M335 391.5h1M282 392.5h1M334 392.5h1M281 393.5h1M333 393.5h1M281 394.5h1M332 394.5h1M280 395.5h1M332 395.5h1M279 396.5h1M331 396.5h1M278 397.5h1M330 397.5h1M278 398.5h1M329 398.5h1M277 399.5h1M328 399.5h1M276 400.5h1M328 400.5h1M275 401.5h1M327 401.5h1M274 402.5h1M326 402.5h1M274 403.5h1M325 403.5h1M273 404.5h1M325 404.5h1M272 405.5h1M324 405.5h1M271 406.5h1M323 406.5h1M271 407.5h1M322 407.5h1M270 408.5h1M321 408.5h1M269 409.5h1M321 409.5h1M268 410.5h1M320 410.5h1M267 411.5h1M319 411.5h1M267 412.5h1M318 412.5h1M266 413.5h1M318 413.5h1M265 414.5h1M317 414.5h1M264 415.5h1M316 415.5h1M264 416.5h1M315 416.5h1M263 417.5h1M314 417.5h1M262 418.5h1M314 418.5h1M261 419.5h1M313 419.5h1M260 420.5h1M312 420.5h1M260 421.5h1M311 421.5h1M259 422.5h1M311 422.5h1M258 423.5h1M310 423.5h1M257 424.5h1M309 424.5h1M257 425.5h1M308 425.5h1M256 426.5h1M307 426.5h1M255 427.5h1M307 427.5h1M254 428.5h1M306 428.5h1M253 429.5h1M305 429.5h1M253 430.5h1M304 430.5h1M252 431.5h1M303 431.5h1M251 432.5h1M303 432.5h1M250 433.5h1M302 433.5h1M250 434.5h1M301 434.5h1M249 435.5h1M300 435.5h1M248 436.5h1M300 436.5h1M247 437.5h1M299 437.5h1M246 438.5h1M298 438.5h1M246 439.5h1M297 439.5h1M245 440.5h1M296 440.5h1M244 441.5h1M296 441.5h1M243 442.5h1M295 442.5h1M243 443.5h1M294 443.5h1M242 444.5h1M293 444.5h1M241 445.5h1M293 445.5h1M240 446.5h1M292 446.5h1M239 447.5h1M291 447.5h1M239 448.5h1M290 448.5h1M238 449.5h1M289 449.5h1M237 450.5h1M289 450.5h1M236 451.5h1M288 451.5h1M236 452.5h1M287 452.5h1M235 453.5h1M286 453.5h1M234 454.5h1M286 454.5h1M233 455.5h1M285 455.5h1M232 456.5h1M284 456.5h1M232 457.5h1M283 457.5h1M231 458.5h1M282 458.5h1M230 459.5h1M282 459.5h1M229 460.5h1M281 460.5h1M229 461.5h1M280 461.5h1M228 462.5h1M279 462.5h1M227 463.5h1M279 463.5h1M226 464.5h1M278 464.5h1M225 465.5h1M277 465.5h1M225 466.5h1M276 466.5h1M224 467.5h1M275 467.5h1M223 468.5h1M275 468.5h1M222 469.5h1M274 469.5h1M222 470.5h1M273 470.5h1M221 471.5h1M272 471.5h1M220 472.5h1M271 472.5h1M219 473.5h1M271 473.5h1M218 474.5h1M270 474.5h1M218 475.5h5M269 475.5h1M223 476.5h5M268 476.5h1M228 477.5h5M268 477.5h1M233 478.5h5M267 478.5h1M238 479.5h5M266 479.5h1M243 480.5h5M265 480.5h1M248 481.5h5M264 481.5h1M253 482.5h5M264 482.5h1M258 483.5h6M263 484.5h1"/>
<polygon points="477.46,209.35 488.71,207.60 273.25,483.00 263.00,484.00" fill="#6a6b83" stroke="none"/>
<path d="M486 207.5h3M480 208.5h6M488 208.5h1M477 209.5h3M487 209.5h1M476 210.5h1M486 210.5h1M475 211.5h1M485 211.5h1M475 212.5h1M484 212.5h1M474 213.5h1M484 213.5h1M473 214.5h1M483 214.5h1M472 215.5h1M482 215.5h1M471 216.5h1M481 216.5h1M471 217.5h1M480 217.5h1M470 218.5h1M480 218.5h1M469 219.5h1M479 219.5h1M468 220.5h1M478 220.5h1M467 221.5h1M477 221.5h1M467 222.5h1M477 222.5h1M466 223.5h1M476 223.5h1M465 224.5h1M475 224.5h1M464 225.5h1M474 225.5h1M464 226.5h1M473 226.5h1M463 227.5h1M473 227.5h1M462 228.5h1M472 228.5h1M461 229.5h1M471 229.5h1M460 230.5h1M470 230.5h1M460 231.5h1M470 231.5h1M459 232.5h1M469 232.5h1M458 233.5h1M468 233.5h1M457 234.5h1M467 234.5h1M457 235.5h1M466 235.5h1M456 236.5h1M466 236.5h1M455 237.5h1M465 237.5h1M454 238.5h1M464 238.5h1M453 239.5h1M463 239.5h1M453 240.5h1M462 240.5h1M452 241.5h1M462 241.5h1M451 242.5h1M461 242.5h1M450 243.5h1M460 243.5h1M450 244.5h1M459 244.5h1M449 245.5h1M459 245.5h1M448 246.5h1M458 246.5h1M447 247.5h1M457 247.5h1M446 248.5h1M456 248.5h1M446 249.5h1M455 249.5h1M445 250.5h1M455 250.5h1M444 251.5h1M454 251.5h1M443 252.5h1M453 252.5h1M442 253.5h1M452 253.5h1M442 254.5h1M452 254.5h1M441 255.5h1M451 255.5h1M440 256.5h1M450 256.5h1M439 257.5h1M449 257.5h1M439 258.5h1M448 258.5h1M438 259.5h1M448 259.5h1M437 260.5h1M447 260.5h1M436 261.5h1M446 261.5h1M435 262.5h1M445 262.5h1M435 263.5h1M444 263.5h1M434 264.5h1M444 264.5h1M433 265.5h1M443 265.5h1M432 266.5h1M442 266.5h1M432 267.5h1M441 267.5h1M431 268.5h1M441 268.5h1M430 269.5h1M440 269.5h1M429 270.5h1M439 270.5h1M428 271.5h1M438 271.5h1M428 272.5h1M437 272.5h1M427 273.5h1M437 273.5h1M426 274.5h1M436 274.5h1M425 275.5h1M435 275.5h1M425 276.5h1M434 276.5h1M424 277.5h1M434 277.5h1M423 278.5h1M433 278.5h1M422 279.5h1M432 279.5h1M421 280.5h1M431 280.5h1M421 281.5h1M430 281.5h1M420 282.5h1M430 282.5h1M419 283.5h1M429 283.5h1M418 284.5h1M428 284.5h1M417 285.5h1M427 285.5h1M417 286.5h1M426 286.5h1M416 287.5h1M426 287.5h1M415 288.5h1M425 288.5h1M414 289.5h1M424 289.5h1M414 290.5h1M423 290.5h1M413 291.5h1M423 291.5h1M412 292.5h1M422 292.5h1M411 293.5h1M421 293.5h1M410 294.5h1M420 294.5h1M410 295.5h1M419 295.5h1M409 296.5h1M419 296.5h1M408 297.5h1M418 297.5h1M407 298.5h1M417 298.5h1M407 299.5h1M416 299.5h1M406 300.5h1M416 300.5h1M405 301.5h1M415 301.5h1M404 302.5h1M414 302.5h1M403 303.5h1M413 303.5h1M403 304.5h1M412 304.5h1M402 305.5h1M412 305.5h1M401 306.5h1M411 306.5h1M400 307.5h1M410 307.5h1M400 308.5h1M409 308.5h1M399 309.5h1M408 309.5h1M398 310.5h1M408 310.5h1M397 311.5h1M407 311.5h1M396 312.5h1M406 312.5h1M396 313.5h1M405 313.5h1M395 314.5h1M405 314.5h1M394 315.5h1M404 315.5h1M393 316.5h1M403 316.5h1M393 317.5h1M402 317.5h1M392 318.5h1M401 318.5h1M391 319.5h1M401 319.5h1M390 320.5h1M400 320.5h1M389 321.5h1M399 321.5h1M389 322.5h1M398 322.5h1M388 323.5h1M398 323.5h1M387 324.5h1M397 324.5h1M386 325.5h1M396 325.5h1M385 326.5h1M395 326.5h1M385 327.5h1M394 327.5h1M384 328.5h1M394 328.5h1M383 329.5h1M393 329.5h1M382 330.5h1M392 330.5h1M382 331.5h1M391 331.5h1M381 332.5h1M390 332.5h1M380 333.5h1M390 333.5h1M379 334.5h1M389 334.5h1M378 335.5h1M388 335.5h1M378 336.5h1M387 336.5h1M377 337.5h1M387 337.5h1M376 338.5h1M386 338.5h1M375 339.5h1M385 339.5h1M375 340.5h1M384 340.5h1M374 341.5h1M383 341.5h1M373 342.5h1M383 342.5h1M372 343.5h1M382 343.5h1M371 344.5h1M381 344.5h1M371 345.5h1M380 345.5h1M370 346.5h1M380 346.5h1M369 347.5h1M379 347.5h1M368 348.5h1M378 348.5h1M368 349.5h1M377 349.5h1M367 350.5h1M376 350.5h1M366 351.5h1M376 351.5h1M365 352.5h1M375 352.5h1M364 353.5h1M374 353.5h1M364 354.5h1M373 354.5h1M363 355.5h1M373 355.5h1M362 356.5h1M372 356.5h1M361 357.5h1M371 357.5h1M360 358.5h1M370 358.5h1M360 359.5h1M369 359.5h1M359 360.5h1M369 360.5h1M358 361.5h1M368 361.5h1M357 362.5h1M367 362.5h1M357 363.5h1M366 363.5h1M356 364.5h1M365 364.5h1M355 365.5h1M365 365.5h1M354 366.5h1M364 366.5h1M353 367.5h1M363 367.5h1M353 368.5h1M362 368.5h1M352 369.5h1M362 369.5h1M351 370.5h1M361 370.5h1M350 371.5h1M360 371.5h1M350 372.5h1M359 372.5h1M349 373.5h1M358 373.5h1M348 374.5h1M358 374.5h1M347 375.5h1M357 375.5h1M346 376.5h1M356 376.5h1M346 377.5h1M355 377.5h1M345 378.5h1M355 378.5h1M344 379.5h1M354 379.5h1M343 380.5h1M353 380.5h1M343 381.5h1M352 381.5h1M342 382.5h1M351 382.5h1M341 383.5h1M351 383.5h1M340 384.5h1M350 384.5h1M339 385.5h1M349 385.5h1M339 386.5h1M348 386.5h1M338 387.5h1M347 387.5h1M337 388.5h1M347 388.5h1M336 389.5h1M346 389.5h1M336 390.5h1M345 390.5h1M335 391.5h1M344 391.5h1M334 392.5h1M344 392.5h1M333 393.5h1M343 393.5h1M332 394.5h1M342 394.5h1M332 395.5h1M341 395.5h1M331 396.5h1M340 396.5h1M330 397.5h1M340 397.5h1M329 398.5h1M339 398.5h1M328 399.5h1M338 399.5h1M328 400.5h1M337 400.5h1M327 401.5h1M337 401.5h1M326 402.5h1M336 402.5h1M325 403.5h1M335 403.5h1M325 404.5h1M334 404.5h1M324 405.5h1M333 405.5h1M323 406.5h1M333 406.5h1M322 407.5h1M332 407.5h1M321 408.5h1M331 408.5h1M321 409.5h1M330 409.5h1M320 410.5h1M329 410.5h1M319 411.5h1M329 411.5h1M318 412.5h1M328 412.5h1M318 413.5h1M327 413.5h1M317 414.5h1M326 414.5h1M316 415.5h1M326 415.5h1M315 416.5h1M325 416.5h1M314 417.5h1M324 417.5h1M314 418.5h1M323 418.5h1M313 419.5h1M322 419.5h1M312 420.5h1M322 420.5h1M311 421.5h1M321 421.5h1M311 422.5h1M320 422.5h1M310 423.5h1M319 423.5h1M309 424.5h1M319 424.5h1M308 425.5h1M318 425.5h1M307 426.5h1M317 426.5h1M307 427.5h1M316 427.5h1M306 428.5h1M315 428.5h1M305 429.5h1M315 429.5h1M304 430.5h1M314 430.5h1M303 431.5h1M313 431.5h1M303 432.5h1M312 432.5h1M302 433.5h1M311 433.5h1M301 434.5h1M311 434.5h1M300 435.5h1M310 435.5h1M300 436.5h1M309 436.5h1M299 437.5h1M308 437.5h1M298 438.5h1M308 438.5h1M297 439.5h1M307 439.5h1M296 440.5h1M306 440.5h1M296 441.5h1M305 441.5h1M295 442.5h1M304 442.5h1M294 443.5h1M304 443.5h1M293 444.5h1M303 444.5h1M293 445.5h1M302 445.5h1M292 446.5h1M301 446.5h1M291 447.5h1M301 447.5h1M290 448.5h1M300 448.5h1M289 449.5h1M299 449.5h1M289 450.5h1M298 450.5h1M288 451.5h1M297 451.5h1M287 452.5h1M297 452.5h1M286 453.5h1M296 453.5h1M286 454.5h1M295 454.5h1M285 455.5h1M294 455.5h1M284 456.5h1M293 456.5h1M283 457.5h1M293 457.5h1M282 458.5h1M292 458.5h1M282 459.5h1M291 459.5h1M281 460.5h1M290 460.5h1M280 461.5h1M290 461.5h1M279 462.5h1M289 462.5h1M279 463.5h1M288 463.5h1M278 464.5h1M287 464.5h1M277 465.5h1M286 465.5h1M276 466.5h1M286 466.5h1M275 467.5h1M285 467.5h1M275 468.5h1M284 468.5h1M274 469.5h1M283 469.5h1M273 470.5h1M283 470.5h1M272 471.5h1M282 471.5h1M271 472.5h1M281 472.5h1M271 473.5h1M280 473.5h1M270 474.5h1M279 474.5h1M269 475.5h1M279 475.5h1M268 476.5h1M278 476.5h1M268 477.5h1M277 477.5h1M267 478.5h1M276 478.5h1M266 479.5h1M275 479.5h1M265 480.5h1M275 480.5h1M264 481.5h1M274 481.5h1M264 482.5h1M273 482.5h1M263 483.5h11M263 484.5h1"/>
<polygon points="354.45,229.34 412.47,220.36 196.25,495.25 155.50,486.70" fill="#8a8a8a" stroke="none"/>
<path d="M408 220.5h5M402 221.5h6M411 221.5h1M395 222.5h7M410 222.5h1M389 223.5h6M410 223.5h1M382 224.5h7M409 224.5h1M376 225.5h6M408 225.5h1M370 226.5h6M407 226.5h1M363 227.5h7M406 227.5h1M357 228.5h6M406 228.5h1M354 229.5h3M405 229.5h1M353 230.5h1M404 230.5h1M352 231.5h1M403 231.5h1M352 232.5h1M402 232.5h1M351 233.5h1M402 233.5h1M350 234.5h1M401 234.5h1M349 235.5h1M400 235.5h1M348 236.5h1M399 236.5h1M348 237.5h1M398 237.5h1M347 238.5h1M398 238.5h1M346 239.5h1M397 239.5h1M345 240.5h1M396 240.5h1M345 241.5h1M395 241.5h1M344 242.5h1M395 242.5h1M343 243.5h1M394 243.5h1M342 244.5h1M393 244.5h1M341 245.5h1M392 245.5h1M341 246.5h1M391 246.5h1M340 247.5h1M391 247.5h1M339 248.5h1M390 248.5h1M338 249.5h1M389 249.5h1M338 250.5h1M388 250.5h1M337 251.5h1M387 251.5h1M336 252.5h1M387 252.5h1M335 253.5h1M386 253.5h1M334 254.5h1M385 254.5h1M334 255.5h1M384 255.5h1M333 256.5h1M384 256.5h1M332 257.5h1M383 257.5h1M331 258.5h1M382 258.5h1M331 259.5h1M381 259.5h1M330 260.5h1M380 260.5h1M329 261.5h1M380 261.5h1M328 262.5h1M379 262.5h1M328 263.5h1M378 263.5h1M327 264.5h1M377 264.5h1M326 265.5h1M376 265.5h1M325 266.5h1M376 266.5h1M324 267.5h1M375 267.5h1M324 268.5h1M374 268.5h1M323 269.5h1M373 269.5h1M322 270.5h1M373 270.5h1M321 271.5h1M372 271.5h1M321 272.5h1M371 272.5h1M320 273.5h1M370 273.5h1M319 274.5h1M369 274.5h1M318 275.5h1M369 275.5h1M317 276.5h1M368 276.5h1M317 277.5h1M367 277.5h1M316 278.5h1M366 278.5h1M315 279.5h1M365 279.5h1M314 280.5h1M365 280.5h1M314 281.5h1M364 281.5h1M313 282.5h1M363 282.5h1M312 283.5h1M362 283.5h1M311 284.5h1M362 284.5h1M311 285.5h1M361 285.5h1M310 286.5h1M360 286.5h1M309 287.5h1M359 287.5h1M308 288.5h1M358 288.5h1M307 289.5h1M358 289.5h1M307 290.5h1M357 290.5h1M306 291.5h1M356 291.5h1M305 292.5h1M355 292.5h1M304 293.5h1M354 293.5h1M304 294.5h1M354 294.5h1M303 295.5h1M353 295.5h1M302 296.5h1M352 296.5h1M301 297.5h1M351 297.5h1M300 298.5h1M351 298.5h1M300 299.5h1M350 299.5h1M299 300.5h1M349 300.5h1M298 301.5h1M348 301.5h1M297 302.5h1M347 302.5h1M297 303.5h1M347 303.5h1M296 304.5h1M346 304.5h1M295 305.5h1M345 305.5h1M294 306.5h1M344 306.5h1M294 307.5h1M343 307.5h1M293 308.5h1M343 308.5h1M292 309.5h1M342 309.5h1M291 310.5h1M341 310.5h1M290 311.5h1M340 311.5h1M290 312.5h1M339 312.5h1M289 313.5h1M339 313.5h1M288 314.5h1M338 314.5h1M287 315.5h1M337 315.5h1M287 316.5h1M336 316.5h1M286 317.5h1M336 317.5h1M285 318.5h1M335 318.5h1M284 319.5h1M334 319.5h1M283 320.5h1M333 320.5h1M283 321.5h1M332 321.5h1M282 322.5h1M332 322.5h1M281 323.5h1M331 323.5h1M280 324.5h1M330 324.5h1M280 325.5h1M329 325.5h1M279 326.5h1M328 326.5h1M278 327.5h1M328 327.5h1M277 328.5h1M327 328.5h1M277 329.5h1M326 329.5h1M276 330.5h1M325 330.5h1M275 331.5h1M325 331.5h1M274 332.5h1M324 332.5h1M273 333.5h1M323 333.5h1M273 334.5h1M322 334.5h1M272 335.5h1M321 335.5h1M271 336.5h1M321 336.5h1M270 337.5h1M320 337.5h1M270 338.5h1M319 338.5h1M269 339.5h1M318 339.5h1M268 340.5h1M317 340.5h1M267 341.5h1M317 341.5h1M266 342.5h1M316 342.5h1M266 343.5h1M315 343.5h1M265 344.5h1M314 344.5h1M264 345.5h1M314 345.5h1M263 346.5h1M313 346.5h1M263 347.5h1M312 347.5h1M262 348.5h1M311 348.5h1M261 349.5h1M310 349.5h1M260 350.5h1M310 350.5h1M260 351.5h1M309 351.5h1M259 352.5h1M308 352.5h1M258 353.5h1M307 353.5h1M257 354.5h1M306 354.5h1M256 355.5h1M306 355.5h1M256 356.5h1M305 356.5h1M255 357.5h1M304 357.5h1M254 358.5h1M303 358.5h1M253 359.5h1M303 359.5h1M253 360.5h1M302 360.5h1M252 361.5h1M301 361.5h1M251 362.5h1M300 362.5h1M250 363.5h1M299 363.5h1M249 364.5h1M299 364.5h1M249 365.5h1M298 365.5h1M248 366.5h1M297 366.5h1M247 367.5h1M296 367.5h1M246 368.5h1M295 368.5h1M246 369.5h1M295 369.5h1M245 370.5h1M294 370.5h1M244 371.5h1M293 371.5h1M243 372.5h1M292 372.5h1M243 373.5h1M292 373.5h1M242 374.5h1M291 374.5h1M241 375.5h1M290 375.5h1M240 376.5h1M289 376.5h1M239 377.5h1M288 377.5h1M239 378.5h1M288 378.5h1M238 379.5h1M287 379.5h1M237 380.5h1M286 380.5h1M236 381.5h1M285 381.5h1M236 382.5h1M284 382.5h1M235 383.5h1M284 383.5h1M234 384.5h1M283 384.5h1M233 385.5h1M282 385.5h1M232 386.5h1M281 386.5h1M232 387.5h1M281 387.5h1M231 388.5h1M280 388.5h1M230 389.5h1M279 389.5h1M229 390.5h1M278 390.5h1M229 391.5h1M277 391.5h1M228 392.5h1M277 392.5h1M227 393.5h1M276 393.5h1M226 394.5h1M275 394.5h1M225 395.5h1M274 395.5h1M225 396.5h1M273 396.5h1M224 397.5h1M273 397.5h1M223 398.5h1M272 398.5h1M222 399.5h1M271 399.5h1M222 400.5h1M270 400.5h1M221 401.5h1M269 401.5h1M220 402.5h1M269 402.5h1M219 403.5h1M268 403.5h1M219 404.5h1M267 404.5h1M218 405.5h1M266 405.5h1M217 406.5h1M266 406.5h1M216 407.5h1M265 407.5h1M215 408.5h1M264 408.5h1M215 409.5h1M263 409.5h1M214 410.5h1M262 410.5h1M213 411.5h1M262 411.5h1M212 412.5h1M261 412.5h1M212 413.5h1M260 413.5h1M211 414.5h1M259 414.5h1M210 415.5h1M258 415.5h1M209 416.5h1M258 416.5h1M208 417.5h1M257 417.5h1M208 418.5h1M256 418.5h1M207 419.5h1M255 419.5h1M206 420.5h1M255 420.5h1M205 421.5h1M254 421.5h1M205 422.5h1M253 422.5h1M204 423.5h1M252 423.5h1M203 424.5h1M251 424.5h1M202 425.5h1M251 425.5h1M202 426.5h1M250 426.5h1M201 427.5h1M249 427.5h1M200 428.5h1M248 428.5h1M199 429.5h1M247 429.5h1M198 430.5h1M247 430.5h1M198 431.5h1M246 431.5h1M197 432.5h1M245 432.5h1M196 433.5h1M244 433.5h1M195 434.5h1M244 434.5h1M195 435.5h1M243 435.5h1M194 436.5h1M242 436.5h1M193 437.5h1M241 437.5h1M192 438.5h1M240 438.5h1M191 439.5h1M240 439.5h1M191 440.5h1M239 440.5h1M190 441.5h1M238 441.5h1M189 442.5h1M237 442.5h1M188 443.5h1M236 443.5h1M188 444.5h1M236 444.5h1M187 445.5h1M235 445.5h1M186 446.5h1M234 446.5h1M185 447.5h1M233 447.5h1M185 448.5h1M233 448.5h1M184 449.5h1M232 449.5h1M183 450.5h1M231 450.5h1M182 451.5h1M230 451.5h1M181 452.5h1M229 452.5h1M181 453.5h1M229 453.5h1M180 454.5h1M228 454.5h1M179 455.5h1M227 455.5h1M178 456.5h1M226 456.5h1M178 457.5h1M225 457.5h1M177 458.5h1M225 458.5h1M176 459.5h1M224 459.5h1M175 460.5h1M223 460.5h1M174 461.5h1M222 461.5h1M174 462.5h1M222 462.5h1M173 463.5h1M221 463.5h1M172 464.5h1M220 464.5h1M171 465.5h1M219 465.5h1M171 466.5h1M218 466.5h1M170 467.5h1M218 467.5h1M169 468.5h1M217 468.5h1M168 469.5h1M216 469.5h1M168 470.5h1M215 470.5h1M167 471.5h1M214 471.5h1M166 472.5h1M214 472.5h1M165 473.5h1M213 473.5h1M164 474.5h1M212 474.5h1M164 475.5h1M211 475.5h1M163 476.5h1M210 476.5h1M162 477.5h1M210 477.5h1M161 478.5h1M209 478.5h1M161 479.5h1M208 479.5h1M160 480.5h1M207 480.5h1M159 481.5h1M207 481.5h1M158 482.5h1M206 482.5h1M157 483.5h1M205 483.5h1M157 484.5h1M204 484.5h1M156 485.5h1M203 485.5h1M155 486.5h2M203 486.5h1M157 487.5h5M202 487.5h1M162 488.5h4M201 488.5h1M166 489.5h5M200 489.5h1M171 490.5h5M199 490.5h1M176 491.5h5M199 491.5h1M181 492.5h5M198 492.5h1M186 493.5h4M197 493.5h1M190 494.5h5M196 494.5h1M195 495.5h2"/>
<polygon points="412.47,220.36 422.47,218.35 206.25,493.50 196.25,495.25" fill="#6a6b83" stroke="none"/>
<path d="M419 218.5h4M414 219.5h5M421 219.5h1M412 220.5h2M420 220.5h1M411 221.5h1M420 221.5h1M410 222.5h1M419 222.5h1M410 223.5h1M418 223.5h1M409 224.5h1M417 224.5h1M408 225.5h1M416 225.5h1M407 226.5h1M416 226.5h1M406 227.5h1M415 227.5h1M406 228.5h1M414 228.5h1M405 229.5h1M413 229.5h1M404 230.5h1M412 230.5h1M403 231.5h1M412 231.5h1M402 232.5h1M411 232.5h1M402 233.5h1M410 233.5h1M401 234.5h1M409 234.5h1M400 235.5h1M408 235.5h1M399 236.5h1M408 236.5h1M398 237.5h1M407 237.5h1M398 238.5h1M406 238.5h1M397 239.5h1M405 239.5h1M396 240.5h1M405 240.5h1M395 241.5h1M404 241.5h1M395 242.5h1M403 242.5h1M394 243.5h1M402 243.5h1M393 244.5h1M401 244.5h1M392 245.5h1M401 245.5h1M391 246.5h1M400 246.5h1M391 247.5h1M399 247.5h1M390 248.5h1M398 248.5h1M389 249.5h1M397 249.5h1M388 250.5h1M397 250.5h1M387 251.5h1M396 251.5h1M387 252.5h1M395 252.5h1M386 253.5h1M394 253.5h1M385 254.5h1M394 254.5h1M384 255.5h1M393 255.5h1M384 256.5h1M392 256.5h1M383 257.5h1M391 257.5h1M382 258.5h1M390 258.5h1M381 259.5h1M390 259.5h1M380 260.5h1M389 260.5h1M380 261.5h1M388 261.5h1M379 262.5h1M387 262.5h1M378 263.5h1M386 263.5h1M377 264.5h1M386 264.5h1M376 265.5h1M385 265.5h1M376 266.5h1M384 266.5h1M375 267.5h1M383 267.5h1M374 268.5h1M383 268.5h1M373 269.5h1M382 269.5h1M373 270.5h1M381 270.5h1M372 271.5h1M380 271.5h1M371 272.5h1M379 272.5h1M370 273.5h1M379 273.5h1M369 274.5h1M378 274.5h1M369 275.5h1M377 275.5h1M368 276.5h1M376 276.5h1M367 277.5h1M375 277.5h1M366 278.5h1M375 278.5h1M365 279.5h1M374 279.5h1M365 280.5h1M373 280.5h1M364 281.5h1M372 281.5h1M363 282.5h1M372 282.5h1M362 283.5h1M371 283.5h1M362 284.5h1M370 284.5h1M361 285.5h1M369 285.5h1M360 286.5h1M368 286.5h1M359 287.5h1M368 287.5h1M358 288.5h1M367 288.5h1M358 289.5h1M366 289.5h1M357 290.5h1M365 290.5h1M356 291.5h1M364 291.5h1M355 292.5h1M364 292.5h1M354 293.5h1M363 293.5h1M354 294.5h1M362 294.5h1M353 295.5h1M361 295.5h1M352 296.5h1M361 296.5h1M351 297.5h1M360 297.5h1M351 298.5h1M359 298.5h1M350 299.5h1M358 299.5h1M349 300.5h1M357 300.5h1M348 301.5h1M357 301.5h1M347 302.5h1M356 302.5h1M347 303.5h1M355 303.5h1M346 304.5h1M354 304.5h1M345 305.5h1M353 305.5h1M344 306.5h1M353 306.5h1M343 307.5h1M352 307.5h1M343 308.5h1M351 308.5h1M342 309.5h1M350 309.5h1M341 310.5h1M350 310.5h1M340 311.5h1M349 311.5h1M339 312.5h1M348 312.5h1M339 313.5h1M347 313.5h1M338 314.5h1M346 314.5h1M337 315.5h1M346 315.5h1M336 316.5h1M345 316.5h1M336 317.5h1M344 317.5h1M335 318.5h1M343 318.5h1M334 319.5h1M342 319.5h1M333 320.5h1M342 320.5h1M332 321.5h1M341 321.5h1M332 322.5h1M340 322.5h1M331 323.5h1M339 323.5h1M330 324.5h1M339 324.5h1M329 325.5h1M338 325.5h1M328 326.5h1M337 326.5h1M328 327.5h1M336 327.5h1M327 328.5h1M335 328.5h1M326 329.5h1M335 329.5h1M325 330.5h1M334 330.5h1M325 331.5h1M333 331.5h1M324 332.5h1M332 332.5h1M323 333.5h1M331 333.5h1M322 334.5h1M331 334.5h1M321 335.5h1M330 335.5h1M321 336.5h1M329 336.5h1M320 337.5h1M328 337.5h1M319 338.5h1M328 338.5h1M318 339.5h1M327 339.5h1M317 340.5h1M326 340.5h1M317 341.5h1M325 341.5h1M316 342.5h1M324 342.5h1M315 343.5h1M324 343.5h1M314 344.5h1M323 344.5h1M314 345.5h1M322 345.5h1M313 346.5h1M321 346.5h1M312 347.5h1M320 347.5h1M311 348.5h1M320 348.5h1M310 349.5h1M319 349.5h1M310 350.5h1M318 350.5h1M309 351.5h1M317 351.5h1M308 352.5h1M317 352.5h1M307 353.5h1M316 353.5h1M306 354.5h1M315 354.5h1M306 355.5h1M314 355.5h1M305 356.5h1M313 356.5h1M304 357.5h1M313 357.5h1M303 358.5h1M312 358.5h1M303 359.5h1M311 359.5h1M302 360.5h1M310 360.5h1M301 361.5h1M309 361.5h1M300 362.5h1M309 362.5h1M299 363.5h1M308 363.5h1M299 364.5h1M307 364.5h1M298 365.5h1M306 365.5h1M297 366.5h1M306 366.5h1M296 367.5h1M305 367.5h1M295 368.5h1M304 368.5h1M295 369.5h1M303 369.5h1M294 370.5h1M302 370.5h1M293 371.5h1M302 371.5h1M292 372.5h1M301 372.5h1M292 373.5h1M300 373.5h1M291 374.5h1M299 374.5h1M290 375.5h1M298 375.5h1M289 376.5h1M298 376.5h1M288 377.5h1M297 377.5h1M288 378.5h1M296 378.5h1M287 379.5h1M295 379.5h1M286 380.5h1M295 380.5h1M285 381.5h1M294 381.5h1M284 382.5h1M293 382.5h1M284 383.5h1M292 383.5h1M283 384.5h1M291 384.5h1M282 385.5h1M291 385.5h1M281 386.5h1M290 386.5h1M281 387.5h1M289 387.5h1M280 388.5h1M288 388.5h1M279 389.5h1M287 389.5h1M278 390.5h1M287 390.5h1M277 391.5h1M286 391.5h1M277 392.5h1M285 392.5h1M276 393.5h1M284 393.5h1M275 394.5h1M284 394.5h1M274 395.5h1M283 395.5h1M273 396.5h1M282 396.5h1M273 397.5h1M281 397.5h1M272 398.5h1M280 398.5h1M271 399.5h1M280 399.5h1M270 400.5h1M279 400.5h1M269 401.5h1M278 401.5h1M269 402.5h1M277 402.5h1M268 403.5h1M276 403.5h1M267 404.5h1M276 404.5h1M266 405.5h1M275 405.5h1M266 406.5h1M274 406.5h1M265 407.5h1M273 407.5h1M264 408.5h1M273 408.5h1M263 409.5h1M272 409.5h1M262 410.5h1M271 410.5h1M262 411.5h1M270 411.5h1M261 412.5h1M269 412.5h1M260 413.5h1M269 413.5h1M259 414.5h1M268 414.5h1M258 415.5h1M267 415.5h1M258 416.5h1M266 416.5h1M257 417.5h1M265 417.5h1M256 418.5h1M265 418.5h1M255 419.5h1M264 419.5h1M255 420.5h1M263 420.5h1M254 421.5h1M262 421.5h1M253 422.5h1M262 422.5h1M252 423.5h1M261 423.5h1M251 424.5h1M260 424.5h1M251 425.5h1M259 425.5h1M250 426.5h1M258 426.5h1M249 427.5h1M258 427.5h1M248 428.5h1M257 428.5h1M247 429.5h1M256 429.5h1M247 430.5h1M255 430.5h1M246 431.5h1M254 431.5h1M245 432.5h1M254 432.5h1M244 433.5h1M253 433.5h1M244 434.5h1M252 434.5h1M243 435.5h1M251 435.5h1M242 436.5h1M251 436.5h1M241 437.5h1M250 437.5h1M240 438.5h1M249 438.5h1M240 439.5h1M248 439.5h1M239 440.5h1M247 440.5h1M238 441.5h1M247 441.5h1M237 442.5h1M246 442.5h1M236 443.5h1M245 443.5h1M236 444.5h1M244 444.5h1M235 445.5h1M243 445.5h1M234 446.5h1M243 446.5h1M233 447.5h1M242 447.5h1M233 448.5h1M241 448.5h1M232 449.5h1M240 449.5h1M231 450.5h1M240 450.5h1M230 451.5h1M239 451.5h1M229 452.5h1M238 452.5h1M229 453.5h1M237 453.5h1M228 454.5h1M236 454.5h1M227 455.5h1M236 455.5h1M226 456.5h1M235 456.5h1M225 457.5h1M234 457.5h1M225 458.5h1M233 458.5h1M224 459.5h1M232 459.5h1M223 460.5h1M232 460.5h1M222 461.5h1M231 461.5h1M222 462.5h1M230 462.5h1M221 463.5h1M229 463.5h1M220 464.5h1M229 464.5h1M219 465.5h1M228 465.5h1M218 466.5h1M227 466.5h1M218 467.5h1M226 467.5h1M217 468.5h1M225 468.5h1M216 469.5h1M225 469.5h1M215 470.5h1M224 470.5h1M214 471.5h1M223 471.5h1M214 472.5h1M222 472.5h1M213 473.5h1M221 473.5h1M212 474.5h1M221 474.5h1M211 475.5h1M220 475.5h1M210 476.5h1M219 476.5h1M210 477.5h1M218 477.5h1M209 478.5h1M218 478.5h1M208 479.5h1M217 479.5h1M207 480.5h1M216 480.5h1M207 481.5h1M215 481.5h1M206 482.5h1M214 482.5h1M205 483.5h1M214 483.5h1M204 484.5h1M213 484.5h1M203 485.5h1M212 485.5h1M203 486.5h1M211 486.5h1M202 487.5h1M210 487.5h1M201 488.5h1M210 488.5h1M200 489.5h1M209 489.5h1M199 490.5h1M208 490.5h1M199 491.5h1M207 491.5h1M198 492.5h1M207 492.5h1M197 493.5h1M203 493.5h4M196 494.5h1M198 494.5h5M196 495.5h2"/>
<polygon points="285.47,213.85 349.69,229.27 129.70,506.30 67.50,491.50" fill="#8a8a8a" stroke="none"/>
<path d="M285 213.5h1M284 214.5h1M286 214.5h4M284 215.5h1M290 215.5h4M283 216.5h1M294 216.5h5M282 217.5h1M299 217.5h4M281 218.5h1M303 218.5h4M281 219.5h1M307 219.5h4M280 220.5h1M311 220.5h4M279 221.5h1M315 221.5h4M278 222.5h1M319 222.5h5M277 223.5h1M324 223.5h4M277 224.5h1M328 224.5h4M276 225.5h1M332 225.5h4M275 226.5h1M336 226.5h4M274 227.5h1M340 227.5h4M273 228.5h1M344 228.5h5M273 229.5h1M349 229.5h1M272 230.5h1M348 230.5h1M271 231.5h1M347 231.5h1M270 232.5h1M347 232.5h1M270 233.5h1M346 233.5h1M269 234.5h1M345 234.5h1M268 235.5h1M344 235.5h1M267 236.5h1M343 236.5h1M266 237.5h1M343 237.5h1M266 238.5h1M342 238.5h1M265 239.5h1M341 239.5h1M264 240.5h1M340 240.5h1M263 241.5h1M339 241.5h1M262 242.5h1M339 242.5h1M262 243.5h1M338 243.5h1M261 244.5h1M337 244.5h1M260 245.5h1M336 245.5h1M259 246.5h1M336 246.5h1M259 247.5h1M335 247.5h1M258 248.5h1M334 248.5h1M257 249.5h1M333 249.5h1M256 250.5h1M332 250.5h1M255 251.5h1M332 251.5h1M255 252.5h1M331 252.5h1M254 253.5h1M330 253.5h1M253 254.5h1M329 254.5h1M252 255.5h1M328 255.5h1M251 256.5h1M328 256.5h1M251 257.5h1M327 257.5h1M250 258.5h1M326 258.5h1M249 259.5h1M325 259.5h1M248 260.5h1M324 260.5h1M248 261.5h1M324 261.5h1M247 262.5h1M323 262.5h1M246 263.5h1M322 263.5h1M245 264.5h1M321 264.5h1M244 265.5h1M320 265.5h1M244 266.5h1M320 266.5h1M243 267.5h1M319 267.5h1M242 268.5h1M318 268.5h1M241 269.5h1M317 269.5h1M240 270.5h1M316 270.5h1M240 271.5h1M316 271.5h1M239 272.5h1M315 272.5h1M238 273.5h1M314 273.5h1M237 274.5h1M313 274.5h1M237 275.5h1M312 275.5h1M236 276.5h1M312 276.5h1M235 277.5h1M311 277.5h1M234 278.5h1M310 278.5h1M233 279.5h1M309 279.5h1M233 280.5h1M309 280.5h1M232 281.5h1M308 281.5h1M231 282.5h1M307 282.5h1M230 283.5h1M306 283.5h1M230 284.5h1M305 284.5h1M229 285.5h1M305 285.5h1M228 286.5h1M304 286.5h1M227 287.5h1M303 287.5h1M226 288.5h1M302 288.5h1M226 289.5h1M301 289.5h1M225 290.5h1M301 290.5h1M224 291.5h1M300 291.5h1M223 292.5h1M299 292.5h1M222 293.5h1M298 293.5h1M222 294.5h1M297 294.5h1M221 295.5h1M297 295.5h1M220 296.5h1M296 296.5h1M219 297.5h1M295 297.5h1M219 298.5h1M294 298.5h1M218 299.5h1M293 299.5h1M217 300.5h1M293 300.5h1M216 301.5h1M292 301.5h1M215 302.5h1M291 302.5h1M215 303.5h1M290 303.5h1M214 304.5h1M289 304.5h1M213 305.5h1M289 305.5h1M212 306.5h1M288 306.5h1M211 307.5h1M287 307.5h1M211 308.5h1M286 308.5h1M210 309.5h1M285 309.5h1M209 310.5h1M285 310.5h1M208 311.5h1M284 311.5h1M208 312.5h1M283 312.5h1M207 313.5h1M282 313.5h1M206 314.5h1M282 314.5h1M205 315.5h1M281 315.5h1M204 316.5h1M280 316.5h1M204 317.5h1M279 317.5h1M203 318.5h1M278 318.5h1M202 319.5h1M278 319.5h1M201 320.5h1M277 320.5h1M200 321.5h1M276 321.5h1M200 322.5h1M275 322.5h1M199 323.5h1M274 323.5h1M198 324.5h1M274 324.5h1M197 325.5h1M273 325.5h1M197 326.5h1M272 326.5h1M196 327.5h1M271 327.5h1M195 328.5h1M270 328.5h1M194 329.5h1M270 329.5h1M193 330.5h1M269 330.5h1M193 331.5h1M268 331.5h1M192 332.5h1M267 332.5h1M191 333.5h1M266 333.5h1M190 334.5h1M266 334.5h1M189 335.5h1M265 335.5h1M189 336.5h1M264 336.5h1M188 337.5h1M263 337.5h1M187 338.5h1M262 338.5h1M186 339.5h1M262 339.5h1M186 340.5h1M261 340.5h1M185 341.5h1M260 341.5h1M184 342.5h1M259 342.5h1M183 343.5h1M258 343.5h1M182 344.5h1M258 344.5h1M182 345.5h1M257 345.5h1M181 346.5h1M256 346.5h1M180 347.5h1M255 347.5h1M179 348.5h1M255 348.5h1M178 349.5h1M254 349.5h1M178 350.5h1M253 350.5h1M177 351.5h1M252 351.5h1M176 352.5h1M251 352.5h1M175 353.5h1M251 353.5h1M175 354.5h1M250 354.5h1M174 355.5h1M249 355.5h1M173 356.5h1M248 356.5h1M172 357.5h1M247 357.5h1M171 358.5h1M247 358.5h1M171 359.5h1M246 359.5h1M170 360.5h1M245 360.5h1M169 361.5h1M244 361.5h1M168 362.5h1M243 362.5h1M167 363.5h1M243 363.5h1M167 364.5h1M242 364.5h1M166 365.5h1M241 365.5h1M165 366.5h1M240 366.5h1M164 367.5h1M239 367.5h1M164 368.5h1M239 368.5h1M163 369.5h1M238 369.5h1M162 370.5h1M237 370.5h1M161 371.5h1M236 371.5h1M160 372.5h1M235 372.5h1M160 373.5h1M235 373.5h1M159 374.5h1M234 374.5h1M158 375.5h1M233 375.5h1M157 376.5h1M232 376.5h1M156 377.5h1M231 377.5h1M156 378.5h1M231 378.5h1M155 379.5h1M230 379.5h1M154 380.5h1M229 380.5h1M153 381.5h1M228 381.5h1M153 382.5h1M228 382.5h1M152 383.5h1M227 383.5h1M151 384.5h1M226 384.5h1M150 385.5h1M225 385.5h1M149 386.5h1M224 386.5h1M149 387.5h1M224 387.5h1M148 388.5h1M223 388.5h1M147 389.5h1M222 389.5h1M146 390.5h1M221 390.5h1M146 391.5h1M220 391.5h1M145 392.5h1M220 392.5h1M144 393.5h1M219 393.5h1M143 394.5h1M218 394.5h1M142 395.5h1M217 395.5h1M142 396.5h1M216 396.5h1M141 397.5h1M216 397.5h1M140 398.5h1M215 398.5h1M139 399.5h1M214 399.5h1M138 400.5h1M213 400.5h1M138 401.5h1M212 401.5h1M137 402.5h1M212 402.5h1M136 403.5h1M211 403.5h1M135 404.5h1M210 404.5h1M135 405.5h1M209 405.5h1M134 406.5h1M208 406.5h1M133 407.5h1M208 407.5h1M132 408.5h1M207 408.5h1M131 409.5h1M206 409.5h1M131 410.5h1M205 410.5h1M130 411.5h1M204 411.5h1M129 412.5h1M204 412.5h1M128 413.5h1M203 413.5h1M127 414.5h1M202 414.5h1M127 415.5h1M201 415.5h1M126 416.5h1M201 416.5h1M125 417.5h1M200 417.5h1M124 418.5h1M199 418.5h1M124 419.5h1M198 419.5h1M123 420.5h1M197 420.5h1M122 421.5h1M197 421.5h1M121 422.5h1M196 422.5h1M120 423.5h1M195 423.5h1M120 424.5h1M194 424.5h1M119 425.5h1M193 425.5h1M118 426.5h1M193 426.5h1M117 427.5h1M192 427.5h1M116 428.5h1M191 428.5h1M116 429.5h1M190 429.5h1M115 430.5h1M189 430.5h1M114 431.5h1M189 431.5h1M113 432.5h1M188 432.5h1M113 433.5h1M187 433.5h1M112 434.5h1M186 434.5h1M111 435.5h1M185 435.5h1M110 436.5h1M185 436.5h1M109 437.5h1M184 437.5h1M109 438.5h1M183 438.5h1M108 439.5h1M182 439.5h1M107 440.5h1M181 440.5h1M106 441.5h1M181 441.5h1M105 442.5h1M180 442.5h1M105 443.5h1M179 443.5h1M104 444.5h1M178 444.5h1M103 445.5h1M177 445.5h1M102 446.5h1M177 446.5h1M102 447.5h1M176 447.5h1M101 448.5h1M175 448.5h1M100 449.5h1M174 449.5h1M99 450.5h1M174 450.5h1M98 451.5h1M173 451.5h1M98 452.5h1M172 452.5h1M97 453.5h1M171 453.5h1M96 454.5h1M170 454.5h1M95 455.5h1M170 455.5h1M94 456.5h1M169 456.5h1M94 457.5h1M168 457.5h1M93 458.5h1M167 458.5h1M92 459.5h1M166 459.5h1M91 460.5h1M166 460.5h1M91 461.5h1M165 461.5h1M90 462.5h1M164 462.5h1M89 463.5h1M163 463.5h1M88 464.5h1M162 464.5h1M87 465.5h1M162 465.5h1M87 466.5h1M161 466.5h1M86 467.5h1M160 467.5h1M85 468.5h1M159 468.5h1M84 469.5h1M158 469.5h1M83 470.5h1M158 470.5h1M83 471.5h1M157 471.5h1M82 472.5h1M156 472.5h1M81 473.5h1M155 473.5h1M80 474.5h1M154 474.5h1M80 475.5h1M154 475.5h1M79 476.5h1M153 476.5h1M78 477.5h1M152 477.5h1M77 478.5h1M151 478.5h1M76 479.5h1M150 479.5h1M76 480.5h1M150 480.5h1M75 481.5h1M149 481.5h1M74 482.5h1M148 482.5h1M73 483.5h1M147 483.5h1M72 484.5h1M147 484.5h1M72 485.5h1M146 485.5h1M71 486.5h1M145 486.5h1M70 487.5h1M144 487.5h1M69 488.5h1M143 488.5h1M69 489.5h1M143 489.5h1M68 490.5h1M142 490.5h1M67 491.5h3M141 491.5h1M70 492.5h4M140 492.5h1M74 493.5h4M139 493.5h1M78 494.5h4M139 494.5h1M82 495.5h4M138 495.5h1M86 496.5h5M137 496.5h1M91 497.5h4M136 497.5h1M95 498.5h4M135 498.5h1M99 499.5h4M135 499.5h1M103 500.5h4M134 500.5h1M107 501.5h5M133 501.5h1M112 502.5h4M132 502.5h1M116 503.5h4M131 503.5h1M120 504.5h4M131 504.5h1M124 505.5h4M130 505.5h1M128 506.5h2"/>
<polygon points="349.69,229.27 359.98,228.86 142.30,504.40 129.70,506.30" fill="#6a6b83" stroke="none"/>
<path d="M356 228.5h4M349 229.5h7M359 229.5h1M348 230.5h1M358 230.5h1M347 231.5h1M357 231.5h1M347 232.5h1M357 232.5h1M346 233.5h1M356 233.5h1M345 234.5h1M355 234.5h1M344 235.5h1M354 235.5h1M343 236.5h1M353 236.5h1M343 237.5h1M353 237.5h1M342 238.5h1M352 238.5h1M341 239.5h1M351 239.5h1M340 240.5h1M350 240.5h1M339 241.5h1M349 241.5h1M339 242.5h1M349 242.5h1M338 243.5h1M348 243.5h1M337 244.5h1M347 244.5h1M336 245.5h1M346 245.5h1M336 246.5h1M346 246.5h1M335 247.5h1M345 247.5h1M334 248.5h1M344 248.5h1M333 249.5h1M343 249.5h1M332 250.5h1M342 250.5h1M332 251.5h1M342 251.5h1M331 252.5h1M341 252.5h1M330 253.5h1M340 253.5h1M329 254.5h1M339 254.5h1M328 255.5h1M338 255.5h1M328 256.5h1M338 256.5h1M327 257.5h1M337 257.5h1M326 258.5h1M336 258.5h1M325 259.5h1M335 259.5h1M324 260.5h1M334 260.5h1M324 261.5h1M334 261.5h1M323 262.5h1M333 262.5h1M322 263.5h1M332 263.5h1M321 264.5h1M331 264.5h1M320 265.5h1M331 265.5h1M320 266.5h1M330 266.5h1M319 267.5h1M329 267.5h1M318 268.5h1M328 268.5h1M317 269.5h1M327 269.5h1M316 270.5h1M327 270.5h1M316 271.5h1M326 271.5h1M315 272.5h1M325 272.5h1M314 273.5h1M324 273.5h1M313 274.5h1M323 274.5h1M312 275.5h1M323 275.5h1M312 276.5h1M322 276.5h1M311 277.5h1M321 277.5h1M310 278.5h1M320 278.5h1M309 279.5h1M319 279.5h1M309 280.5h1M319 280.5h1M308 281.5h1M318 281.5h1M307 282.5h1M317 282.5h1M306 283.5h1M316 283.5h1M305 284.5h1M316 284.5h1M305 285.5h1M315 285.5h1M304 286.5h1M314 286.5h1M303 287.5h1M313 287.5h1M302 288.5h1M312 288.5h1M301 289.5h1M312 289.5h1M301 290.5h1M311 290.5h1M300 291.5h1M310 291.5h1M299 292.5h1M309 292.5h1M298 293.5h1M308 293.5h1M297 294.5h1M308 294.5h1M297 295.5h1M307 295.5h1M296 296.5h1M306 296.5h1M295 297.5h1M305 297.5h1M294 298.5h1M304 298.5h1M293 299.5h1M304 299.5h1M293 300.5h1M303 300.5h1M292 301.5h1M302 301.5h1M291 302.5h1M301 302.5h1M290 303.5h1M301 303.5h1M289 304.5h1M300 304.5h1M289 305.5h1M299 305.5h1M288 306.5h1M298 306.5h1M287 307.5h1M297 307.5h1M286 308.5h1M297 308.5h1M285 309.5h1M296 309.5h1M285 310.5h1M295 310.5h1M284 311.5h1M294 311.5h1M283 312.5h1M293 312.5h1M282 313.5h1M293 313.5h1M282 314.5h1M292 314.5h1M281 315.5h1M291 315.5h1M280 316.5h1M290 316.5h1M279 317.5h1M289 317.5h1M278 318.5h1M289 318.5h1M278 319.5h1M288 319.5h1M277 320.5h1M287 320.5h1M276 321.5h1M286 321.5h1M275 322.5h1M286 322.5h1M274 323.5h1M285 323.5h1M274 324.5h1M284 324.5h1M273 325.5h1M283 325.5h1M272 326.5h1M282 326.5h1M271 327.5h1M282 327.5h1M270 328.5h1M281 328.5h1M270 329.5h1M280 329.5h1M269 330.5h1M279 330.5h1M268 331.5h1M278 331.5h1M267 332.5h1M278 332.5h1M266 333.5h1M277 333.5h1M266 334.5h1M276 334.5h1M265 335.5h1M275 335.5h1M264 336.5h1M274 336.5h1M263 337.5h1M274 337.5h1M262 338.5h1M273 338.5h1M262 339.5h1M272 339.5h1M261 340.5h1M271 340.5h1M260 341.5h1M270 341.5h1M259 342.5h1M270 342.5h1M258 343.5h1M269 343.5h1M258 344.5h1M268 344.5h1M257 345.5h1M267 345.5h1M256 346.5h1M267 346.5h1M255 347.5h1M266 347.5h1M255 348.5h1M265 348.5h1M254 349.5h1M264 349.5h1M253 350.5h1M263 350.5h1M252 351.5h1M263 351.5h1M251 352.5h1M262 352.5h1M251 353.5h1M261 353.5h1M250 354.5h1M260 354.5h1M249 355.5h1M259 355.5h1M248 356.5h1M259 356.5h1M247 357.5h1M258 357.5h1M247 358.5h1M257 358.5h1M246 359.5h1M256 359.5h1M245 360.5h1M255 360.5h1M244 361.5h1M255 361.5h1M243 362.5h1M254 362.5h1M243 363.5h1M253 363.5h1M242 364.5h1M252 364.5h1M241 365.5h1M252 365.5h1M240 366.5h1M251 366.5h1M239 367.5h1M250 367.5h1M239 368.5h1M249 368.5h1M238 369.5h1M248 369.5h1M237 370.5h1M248 370.5h1M236 371.5h1M247 371.5h1M235 372.5h1M246 372.5h1M235 373.5h1M245 373.5h1M234 374.5h1M244 374.5h1M233 375.5h1M244 375.5h1M232 376.5h1M243 376.5h1M231 377.5h1M242 377.5h1M231 378.5h1M241 378.5h1M230 379.5h1M240 379.5h1M229 380.5h1M240 380.5h1M228 381.5h1M239 381.5h1M228 382.5h1M238 382.5h1M227 383.5h1M237 383.5h1M226 384.5h1M237 384.5h1M225 385.5h1M236 385.5h1M224 386.5h1M235 386.5h1M224 387.5h1M234 387.5h1M223 388.5h1M233 388.5h1M222 389.5h1M233 389.5h1M221 390.5h1M232 390.5h1M220 391.5h1M231 391.5h1M220 392.5h1M230 392.5h1M219 393.5h1M229 393.5h1M218 394.5h1M229 394.5h1M217 395.5h1M228 395.5h1M216 396.5h1M227 396.5h1M216 397.5h1M226 397.5h1M215 398.5h1M225 398.5h1M214 399.5h1M225 399.5h1M213 400.5h1M224 400.5h1M212 401.5h1M223 401.5h1M212 402.5h1M222 402.5h1M211 403.5h1M222 403.5h1M210 404.5h1M221 404.5h1M209 405.5h1M220 405.5h1M208 406.5h1M219 406.5h1M208 407.5h1M218 407.5h1M207 408.5h1M218 408.5h1M206 409.5h1M217 409.5h1M205 410.5h1M216 410.5h1M204 411.5h1M215 411.5h1M204 412.5h1M214 412.5h1M203 413.5h1M214 413.5h1M202 414.5h1M213 414.5h1M201 415.5h1M212 415.5h1M201 416.5h1M211 416.5h1M200 417.5h1M210 417.5h1M199 418.5h1M210 418.5h1M198 419.5h1M209 419.5h1M197 420.5h1M208 420.5h1M197 421.5h1M207 421.5h1M196 422.5h1M207 422.5h1M195 423.5h1M206 423.5h1M194 424.5h1M205 424.5h1M193 425.5h1M204 425.5h1M193 426.5h1M203 426.5h1M192 427.5h1M203 427.5h1M191 428.5h1M202 428.5h1M190 429.5h1M201 429.5h1M189 430.5h1M200 430.5h1M189 431.5h1M199 431.5h1M188 432.5h1M199 432.5h1M187 433.5h1M198 433.5h1M186 434.5h1M197 434.5h1M185 435.5h1M196 435.5h1M185 436.5h1M195 436.5h1M184 437.5h1M195 437.5h1M183 438.5h1M194 438.5h1M182 439.5h1M193 439.5h1M181 440.5h1M192 440.5h1M181 441.5h1M191 441.5h1M180 442.5h1M191 442.5h1M179 443.5h1M190 443.5h1M178 444.5h1M189 444.5h1M177 445.5h1M188 445.5h1M177 446.5h1M188 446.5h1M176 447.5h1M187 447.5h1M175 448.5h1M186 448.5h1M174 449.5h1M185 449.5h1M174 450.5h1M184 450.5h1M173 451.5h1M184 451.5h1M172 452.5h1M183 452.5h1M171 453.5h1M182 453.5h1M170 454.5h1M181 454.5h1M170 455.5h1M180 455.5h1M169 456.5h1M180 456.5h1M168 457.5h1M179 457.5h1M167 458.5h1M178 458.5h1M166 459.5h1M177 459.5h1M166 460.5h1M176 460.5h1M165 461.5h1M176 461.5h1M164 462.5h1M175 462.5h1M163 463.5h1M174 463.5h1M162 464.5h1M173 464.5h1M162 465.5h1M173 465.5h1M161 466.5h1M172 466.5h1M160 467.5h1M171 467.5h1M159 468.5h1M170 468.5h1M158 469.5h1M169 469.5h1M158 470.5h1M169 470.5h1M157 471.5h1M168 471.5h1M156 472.5h1M167 472.5h1M155 473.5h1M166 473.5h1M154 474.5h1M165 474.5h1M154 475.5h1M165 475.5h1M153 476.5h1M164 476.5h1M152 477.5h1M163 477.5h1M151 478.5h1M162 478.5h1M150 479.5h1M161 479.5h1M150 480.5h1M161 480.5h1M149 481.5h1M160 481.5h1M148 482.5h1M159 482.5h1M147 483.5h1M158 483.5h1M147 484.5h1M158 484.5h1M146 485.5h1M157 485.5h1M145 486.5h1M156 486.5h1M144 487.5h1M155 487.5h1M143 488.5h1M154 488.5h1M143 489.5h1M154 489.5h1M142 490.5h1M153 490.5h1M141 491.5h1M152 491.5h1M140 492.5h1M151 492.5h1M139 493.5h1M150 493.5h1M139 494.5h1M150 494.5h1M138 495.5h1M149 495.5h1M137 496.5h1M148 496.5h1M136 497.5h1M147 497.5h1M135 498.5h1M146 498.5h1M135 499.5h1M146 499.5h1M134 500.5h1M145 500.5h1M133 501.5h1M144 501.5h1M132 502.5h1M143 502.5h1M131 503.5h1M143 503.5h1M131 504.5h1M138 504.5h5M130 505.5h1M132 505.5h6M129 506.5h3"/>
<polygon points="251.00,181.40 335.00,200.18 350.00,231.70 283.00,217.00" fill="#696b7b" stroke="none"/>
<path d="M251 181.5h3M251 182.5h1M254 182.5h4M252 183.5h1M258 183.5h5M253 184.5h1M263 184.5h4M254 185.5h1M267 185.5h5M255 186.5h1M272 186.5h4M256 187.5h1M276 187.5h5M257 188.5h1M281 188.5h4M258 189.5h1M285 189.5h4M259 190.5h1M289 190.5h5M260 191.5h1M294 191.5h4M260 192.5h1M298 192.5h5M261 193.5h1M303 193.5h4M262 194.5h1M307 194.5h5M263 195.5h1M312 195.5h4M264 196.5h1M316 196.5h5M265 197.5h1M321 197.5h4M266 198.5h1M325 198.5h5M267 199.5h1M330 199.5h4M268 200.5h1M334 200.5h2M269 201.5h1M335 201.5h1M269 202.5h1M336 202.5h1M270 203.5h1M336 203.5h1M271 204.5h1M337 204.5h1M272 205.5h1M337 205.5h1M273 206.5h1M338 206.5h1M274 207.5h1M338 207.5h1M275 208.5h1M338 208.5h1M276 209.5h1M339 209.5h1M277 210.5h1M339 210.5h1M278 211.5h1M340 211.5h1M278 212.5h1M340 212.5h1M279 213.5h1M341 213.5h1M280 214.5h1M341 214.5h1M281 215.5h1M342 215.5h1M282 216.5h1M342 216.5h1M283 217.5h5M343 217.5h1M288 218.5h4M343 218.5h1M292 219.5h5M344 219.5h1M297 220.5h4M344 220.5h1M301 221.5h5M345 221.5h1M306 222.5h4M345 222.5h1M310 223.5h5M346 223.5h1M315 224.5h4M346 224.5h1M319 225.5h5M347 225.5h1M324 226.5h5M347 226.5h1M329 227.5h4M348 227.5h1M333 228.5h5M348 228.5h1M338 229.5h4M348 229.5h1M342 230.5h5M349 230.5h1M347 231.5h4"/>
<polygon points="335.00,200.18 612.00,156.50 557.20,199.30" fill="#6f7089" stroke="none"/>
<path d="M609 156.5h4M602 157.5h7M610 157.5h1M596 158.5h6M609 158.5h1M590 159.5h6M608 159.5h1M583 160.5h7M606 160.5h2M577 161.5h6M605 161.5h1M571 162.5h6M604 162.5h1M564 163.5h7M602 163.5h2M558 164.5h6M601 164.5h1M552 165.5h6M600 165.5h1M545 166.5h7M599 166.5h1M539 167.5h6M597 167.5h2M533 168.5h6M596 168.5h1M526 169.5h7M595 169.5h1M520 170.5h6M593 170.5h2M514 171.5h6M592 171.5h1M507 172.5h7M591 172.5h1M501 173.5h6M590 173.5h1M495 174.5h6M588 174.5h2M488 175.5h7M587 175.5h1M482 176.5h6M586 176.5h1M476 177.5h6M584 177.5h2M469 178.5h7M583 178.5h1M463 179.5h6M582 179.5h1M457 180.5h6M581 180.5h1M450 181.5h7M579 181.5h2M444 182.5h6M578 182.5h1M438 183.5h6M577 183.5h1M431 184.5h7M576 184.5h1M425 185.5h6M574 185.5h2M419 186.5h6M573 186.5h1M412 187.5h7M572 187.5h1M406 188.5h6M570 188.5h2M400 189.5h6M569 189.5h1M393 190.5h7M568 190.5h1M387 191.5h6M567 191.5h1M381 192.5h6M565 192.5h2M374 193.5h7M564 193.5h1M368 194.5h6M563 194.5h1M362 195.5h6M561 195.5h2M355 196.5h7M560 196.5h1M349 197.5h6M559 197.5h1M342 198.5h7M558 198.5h1M336 199.5h6M380 199.5h178M335 200.5h45"/>
<polygon points="335.00,200.18 557.20,199.30 350.00,231.70" fill="#6f7089" stroke="none"/>
<path d="M380 199.5h178M335 200.5h45M546 200.5h7M335 201.5h1M540 201.5h6M336 202.5h1M534 202.5h6M336 203.5h1M527 203.5h7M337 204.5h1M521 204.5h6M337 205.5h1M514 205.5h7M338 206.5h1M508 206.5h6M338 207.5h1M502 207.5h6M338 208.5h1M495 208.5h7M339 209.5h1M489 209.5h6M339 210.5h1M482 210.5h7M340 211.5h1M476 211.5h6M340 212.5h1M470 212.5h6M341 213.5h1M463 213.5h7M341 214.5h1M457 214.5h6M342 215.5h1M450 215.5h7M342 216.5h1M444 216.5h6M343 217.5h1M438 217.5h6M343 218.5h1M431 218.5h7M344 219.5h1M425 219.5h6M344 220.5h1M418 220.5h7M345 221.5h1M412 221.5h6M345 222.5h1M406 222.5h6M346 223.5h1M399 223.5h7M346 224.5h1M393 224.5h6M347 225.5h1M386 225.5h7M347 226.5h1M380 226.5h6M348 227.5h1M374 227.5h6M348 228.5h1M367 228.5h7M348 229.5h1M361 229.5h6M349 230.5h1M354 230.5h7M349 231.5h5"/>
<polygon points="245.10,167.50 273.60,162.90 274.50,173.90" fill="#79798b" stroke="none"/>
<path d="M273 162.5h1M267 163.5h7M261 164.5h6M273 164.5h1M254 165.5h7M273 165.5h1M248 166.5h6M273 166.5h1M245 167.5h3M273 167.5h1M247 168.5h5M274 168.5h1M252 169.5h5M274 169.5h1M257 170.5h4M274 170.5h1M261 171.5h5M274 171.5h1M266 172.5h4M274 172.5h1M270 173.5h5"/>
<polygon points="307.10,180.80 339.20,189.00 619.39,143.00 587.50,135.60" fill="#79798b" stroke="none"/>
<path d="M585 135.5h4M579 136.5h6M589 136.5h5M573 137.5h6M594 137.5h4M566 138.5h7M598 138.5h4M560 139.5h6M602 139.5h4M554 140.5h6M606 140.5h5M548 141.5h6M611 141.5h4M542 142.5h6M615 142.5h4M535 143.5h7M613 143.5h7M529 144.5h6M607 144.5h6M523 145.5h6M601 145.5h6M517 146.5h6M595 146.5h6M511 147.5h6M589 147.5h6M504 148.5h7M583 148.5h6M498 149.5h6M577 149.5h6M492 150.5h6M571 150.5h6M486 151.5h6M565 151.5h6M480 152.5h6M558 152.5h7M473 153.5h7M552 153.5h6M467 154.5h6M546 154.5h6M461 155.5h6M540 155.5h6M455 156.5h6M534 156.5h6M449 157.5h6M528 157.5h6M442 158.5h7M522 158.5h6M436 159.5h6M516 159.5h6M430 160.5h6M510 160.5h6M424 161.5h6M504 161.5h6M418 162.5h6M498 162.5h6M411 163.5h7M491 163.5h7M405 164.5h6M485 164.5h6M399 165.5h6M479 165.5h6M393 166.5h6M473 166.5h6M387 167.5h6M467 167.5h6M380 168.5h7M461 168.5h6M374 169.5h6M455 169.5h6M368 170.5h6M449 170.5h6M362 171.5h6M443 171.5h6M355 172.5h7M437 172.5h6M349 173.5h6M431 173.5h6M343 174.5h6M424 174.5h7M337 175.5h6M418 175.5h6M331 176.5h6M412 176.5h6M324 177.5h7M406 177.5h6M318 178.5h6M400 178.5h6M312 179.5h6M394 179.5h6M307 180.5h5M388 180.5h6M308 181.5h4M382 181.5h6M312 182.5h4M376 182.5h6M316 183.5h4M370 183.5h6M320 184.5h4M364 184.5h6M324 185.5h3M357 185.5h7M327 186.5h4M351 186.5h6M331 187.5h4M345 187.5h6M335 188.5h10M339 189.5h1"/>
<polygon points="339.20,189.00 619.39,143.00 618.39,155.23 339.30,201.30" fill="#545669" stroke="none"/>
<path d="M613 143.5h7M607 144.5h6M619 144.5h1M601 145.5h6M619 145.5h1M595 146.5h6M619 146.5h1M589 147.5h6M619 147.5h1M583 148.5h6M618 148.5h1M577 149.5h6M618 149.5h1M571 150.5h6M618 150.5h1M565 151.5h6M618 151.5h1M558 152.5h7M618 152.5h1M552 153.5h6M618 153.5h1M546 154.5h6M618 154.5h1M540 155.5h6M614 155.5h5M534 156.5h6M608 156.5h6M528 157.5h6M602 157.5h6M522 158.5h6M596 158.5h6M516 159.5h6M589 159.5h7M510 160.5h6M583 160.5h6M504 161.5h6M577 161.5h6M498 162.5h6M571 162.5h6M491 163.5h7M565 163.5h6M485 164.5h6M559 164.5h6M479 165.5h6M553 165.5h6M473 166.5h6M547 166.5h6M467 167.5h6M541 167.5h6M461 168.5h6M535 168.5h6M455 169.5h6M529 169.5h6M449 170.5h6M523 170.5h6M443 171.5h6M517 171.5h6M437 172.5h6M511 172.5h6M431 173.5h6M505 173.5h6M424 174.5h7M499 174.5h6M418 175.5h6M493 175.5h6M412 176.5h6M487 176.5h6M406 177.5h6M480 177.5h7M400 178.5h6M474 178.5h6M394 179.5h6M468 179.5h6M388 180.5h6M462 180.5h6M382 181.5h6M456 181.5h6M376 182.5h6M450 182.5h6M370 183.5h6M444 183.5h6M364 184.5h6M438 184.5h6M357 185.5h7M432 185.5h6M351 186.5h6M426 186.5h6M345 187.5h6M420 187.5h6M339 188.5h6M414 188.5h6M339 189.5h1M408 189.5h6M339 190.5h1M402 190.5h6M339 191.5h1M396 191.5h6M339 192.5h1M390 192.5h6M339 193.5h1M384 193.5h6M339 194.5h1M377 194.5h7M339 195.5h1M371 195.5h6M339 196.5h1M365 196.5h6M339 197.5h1M359 197.5h6M339 198.5h1M353 198.5h6M339 199.5h1M347 199.5h6M339 200.5h1M341 200.5h6M339 201.5h2"/>
<polygon points="245.10,167.50 274.50,173.90 246.20,180.20" fill="#8c8c8c" stroke="none"/>
<path d="M245 167.5h2M245 168.5h1M247 168.5h5M245 169.5h1M252 169.5h5M245 170.5h1M257 170.5h4M245 171.5h1M261 171.5h5M245 172.5h1M266 172.5h4M245 173.5h1M270 173.5h5M245 174.5h1M270 174.5h4M245 175.5h1M265 175.5h5M245 176.5h1M261 176.5h4M245 177.5h1M256 177.5h5M246 178.5h1M252 178.5h4M246 179.5h6M246 180.5h1"/>
<polygon points="246.20,180.20 274.50,173.90 307.10,180.80 339.30,201.30" fill="#8c8c8c" stroke="none"/>
<path d="M274 173.5h1M270 174.5h4M275 174.5h5M265 175.5h5M280 175.5h4M261 176.5h4M284 176.5h5M256 177.5h5M289 177.5h5M252 178.5h4M294 178.5h5M247 179.5h5M299 179.5h4M246 180.5h4M303 180.5h5M250 181.5h4M307 181.5h2M254 182.5h5M309 182.5h2M259 183.5h4M311 183.5h1M263 184.5h4M312 184.5h2M267 185.5h5M314 185.5h1M272 186.5h4M315 186.5h2M276 187.5h5M317 187.5h1M281 188.5h4M318 188.5h2M285 189.5h4M320 189.5h2M289 190.5h5M322 190.5h1M294 191.5h4M323 191.5h2M298 192.5h5M325 192.5h1M303 193.5h4M326 193.5h2M307 194.5h5M328 194.5h1M312 195.5h4M329 195.5h2M316 196.5h4M331 196.5h2M320 197.5h5M333 197.5h1M325 198.5h4M334 198.5h2M329 199.5h5M336 199.5h1M334 200.5h5M338 201.5h2"/>
<polygon points="307.10,180.80 339.20,189.00 339.30,201.30" fill="#8c8c8c" stroke="none"/>
<path d="M307 180.5h1M307 181.5h5M309 182.5h2M312 182.5h4M311 183.5h1M316 183.5h4M312 184.5h2M320 184.5h4M314 185.5h1M324 185.5h3M315 186.5h2M327 186.5h4M317 187.5h1M331 187.5h4M318 188.5h2M335 188.5h4M320 189.5h2M339 189.5h1M322 190.5h1M339 190.5h1M323 191.5h2M339 191.5h1M325 192.5h1M339 192.5h1M326 193.5h2M339 193.5h1M328 194.5h1M339 194.5h1M329 195.5h2M339 195.5h1M331 196.5h2M339 196.5h1M333 197.5h1M339 197.5h1M334 198.5h2M339 198.5h1M336 199.5h1M339 199.5h1M337 200.5h3M339 201.5h1"/>
<polygon points="268.34,107.50 300.50,115.00 596.90,66.45 566.50,59.20" fill="#79798b" stroke="none"/>
<path d="M562 59.5h8M555 60.5h7M570 60.5h4M549 61.5h6M574 61.5h4M543 62.5h6M578 62.5h4M537 63.5h6M582 63.5h5M531 64.5h6M587 64.5h4M525 65.5h6M591 65.5h4M518 66.5h7M594 66.5h3M512 67.5h6M587 67.5h7M506 68.5h6M581 68.5h6M500 69.5h6M575 69.5h6M494 70.5h6M569 70.5h6M487 71.5h7M563 71.5h6M481 72.5h6M557 72.5h6M475 73.5h6M551 73.5h6M469 74.5h6M545 74.5h6M463 75.5h6M539 75.5h6M457 76.5h6M532 76.5h7M450 77.5h7M526 77.5h6M444 78.5h6M520 78.5h6M438 79.5h6M514 79.5h6M432 80.5h6M508 80.5h6M426 81.5h6M502 81.5h6M420 82.5h6M496 82.5h6M413 83.5h7M490 83.5h6M407 84.5h6M484 84.5h6M401 85.5h6M478 85.5h6M395 86.5h6M471 86.5h7M389 87.5h6M465 87.5h6M383 88.5h6M459 88.5h6M376 89.5h7M453 89.5h6M370 90.5h6M447 90.5h6M364 91.5h6M441 91.5h6M358 92.5h6M435 92.5h6M352 93.5h6M429 93.5h6M346 94.5h6M423 94.5h6M339 95.5h7M416 95.5h7M333 96.5h6M410 96.5h6M327 97.5h6M404 97.5h6M321 98.5h6M398 98.5h6M315 99.5h6M392 99.5h6M308 100.5h7M386 100.5h6M302 101.5h6M380 101.5h6M296 102.5h6M374 102.5h6M290 103.5h6M368 103.5h6M284 104.5h6M362 104.5h6M278 105.5h6M355 105.5h7M271 106.5h7M349 106.5h6M268 107.5h3M343 107.5h6M270 108.5h5M337 108.5h6M275 109.5h4M331 109.5h6M279 110.5h4M325 110.5h6M283 111.5h5M319 111.5h6M288 112.5h4M313 112.5h6M292 113.5h4M307 113.5h6M296 114.5h4M301 114.5h6M300 115.5h1"/>
<polygon points="268.34,107.50 300.50,115.00 307.10,180.80 274.50,173.90" fill="#8c8c8c" stroke="none"/>
<path d="M268 107.5h2M268 108.5h1M270 108.5h5M268 109.5h1M275 109.5h4M268 110.5h1M279 110.5h4M268 111.5h1M283 111.5h5M268 112.5h1M288 112.5h4M268 113.5h1M292 113.5h4M268 114.5h1M296 114.5h4M269 115.5h1M300 115.5h1M269 116.5h1M300 116.5h1M269 117.5h1M300 117.5h1M269 118.5h1M300 118.5h1M269 119.5h1M300 119.5h1M269 120.5h1M301 120.5h1M269 121.5h1M301 121.5h1M269 122.5h1M301 122.5h1M269 123.5h1M301 123.5h1M269 124.5h1M301 124.5h1M270 125.5h1M301 125.5h1M270 126.5h1M301 126.5h1M270 127.5h1M301 127.5h1M270 128.5h1M301 128.5h1M270 129.5h1M301 129.5h1M270 130.5h1M302 130.5h1M270 131.5h1M302 131.5h1M270 132.5h1M302 132.5h1M270 133.5h1M302 133.5h1M270 134.5h1M302 134.5h1M270 135.5h1M302 135.5h1M271 136.5h1M302 136.5h1M271 137.5h1M302 137.5h1M271 138.5h1M302 138.5h1M271 139.5h1M302 139.5h1M271 140.5h1M303 140.5h1M271 141.5h1M303 141.5h1M271 142.5h1M303 142.5h1M271 143.5h1M303 143.5h1M271 144.5h1M303 144.5h1M271 145.5h1M303 145.5h1M271 146.5h1M303 146.5h1M272 147.5h1M303 147.5h1M272 148.5h1M303 148.5h1M272 149.5h1M303 149.5h1M272 150.5h1M304 150.5h1M272 151.5h1M304 151.5h1M272 152.5h1M304 152.5h1M272 153.5h1M304 153.5h1M272 154.5h1M304 154.5h1M272 155.5h1M304 155.5h1M272 156.5h1M304 156.5h1M272 157.5h1M304 157.5h1M273 158.5h1M304 158.5h1M273 159.5h1M304 159.5h1M273 160.5h1M305 160.5h1M273 161.5h1M305 161.5h1M273 162.5h1M305 162.5h1M273 163.5h1M305 163.5h1M273 164.5h1M305 164.5h1M273 165.5h1M305 165.5h1M273 166.5h1M305 166.5h1M273 167.5h1M305 167.5h1M273 168.5h1M305 168.5h1M274 169.5h1M305 169.5h1M274 170.5h1M306 170.5h1M274 171.5h1M306 171.5h1M274 172.5h1M306 172.5h1M274 173.5h1M306 173.5h1M275 174.5h5M306 174.5h1M280 175.5h4M306 175.5h1M284 176.5h5M306 176.5h1M289 177.5h5M306 177.5h1M294 178.5h5M306 178.5h1M299 179.5h4M306 179.5h1M303 180.5h5"/>
<polygon points="300.50,115.00 596.90,66.45 587.50,135.60 307.10,180.80" fill="#545669" stroke="none"/>
<path d="M594 66.5h3M587 67.5h7M596 67.5h1M581 68.5h6M596 68.5h1M575 69.5h6M596 69.5h1M569 70.5h6M596 70.5h1M563 71.5h6M596 71.5h1M557 72.5h6M596 72.5h1M551 73.5h6M595 73.5h1M545 74.5h6M595 74.5h1M539 75.5h6M595 75.5h1M532 76.5h7M595 76.5h1M526 77.5h6M595 77.5h1M520 78.5h6M595 78.5h1M514 79.5h6M595 79.5h1M508 80.5h6M594 80.5h1M502 81.5h6M594 81.5h1M496 82.5h6M594 82.5h1M490 83.5h6M594 83.5h1M484 84.5h6M594 84.5h1M478 85.5h6M594 85.5h1M471 86.5h7M594 86.5h1M465 87.5h6M594 87.5h1M459 88.5h6M593 88.5h1M453 89.5h6M593 89.5h1M447 90.5h6M593 90.5h1M441 91.5h6M593 91.5h1M435 92.5h6M593 92.5h1M429 93.5h6M593 93.5h1M423 94.5h6M593 94.5h1M416 95.5h7M592 95.5h1M410 96.5h6M592 96.5h1M404 97.5h6M592 97.5h1M398 98.5h6M592 98.5h1M392 99.5h6M592 99.5h1M386 100.5h6M592 100.5h1M380 101.5h6M592 101.5h1M374 102.5h6M591 102.5h1M368 103.5h6M591 103.5h1M362 104.5h6M591 104.5h1M355 105.5h7M591 105.5h1M349 106.5h6M591 106.5h1M343 107.5h6M591 107.5h1M337 108.5h6M591 108.5h1M331 109.5h6M591 109.5h1M325 110.5h6M590 110.5h1M319 111.5h6M590 111.5h1M313 112.5h6M590 112.5h1M307 113.5h6M590 113.5h1M301 114.5h6M590 114.5h1M300 115.5h1M590 115.5h1M300 116.5h1M590 116.5h1M300 117.5h1M589 117.5h1M300 118.5h1M589 118.5h1M300 119.5h1M589 119.5h1M301 120.5h1M589 120.5h1M301 121.5h1M589 121.5h1M301 122.5h1M589 122.5h1M301 123.5h1M589 123.5h1M301 124.5h1M589 124.5h1M301 125.5h1M588 125.5h1M301 126.5h1M588 126.5h1M301 127.5h1M588 127.5h1M301 128.5h1M588 128.5h1M301 129.5h1M588 129.5h1M302 130.5h1M588 130.5h1M302 131.5h1M588 131.5h1M302 132.5h1M587 132.5h1M302 133.5h1M587 133.5h1M302 134.5h1M587 134.5h1M302 135.5h1M585 135.5h3M302 136.5h1M579 136.5h6M302 137.5h1M573 137.5h6M302 138.5h1M566 138.5h7M302 139.5h1M560 139.5h6M303 140.5h1M554 140.5h6M303 141.5h1M548 141.5h6M303 142.5h1M542 142.5h6M303 143.5h1M535 143.5h7M303 144.5h1M529 144.5h6M303 145.5h1M523 145.5h6M303 146.5h1M517 146.5h6M303 147.5h1M511 147.5h6M303 148.5h1M504 148.5h7M303 149.5h1M498 149.5h6M304 150.5h1M492 150.5h6M304 151.5h1M486 151.5h6M304 152.5h1M480 152.5h6M304 153.5h1M473 153.5h7M304 154.5h1M467 154.5h6M304 155.5h1M461 155.5h6M304 156.5h1M455 156.5h6M304 157.5h1M449 157.5h6M304 158.5h1M442 158.5h7M304 159.5h1M436 159.5h6M305 160.5h1M430 160.5h6M305 161.5h1M424 161.5h6M305 162.5h1M418 162.5h6M305 163.5h1M411 163.5h7M305 164.5h1M405 164.5h6M305 165.5h1M399 165.5h6M305 166.5h1M393 166.5h6M305 167.5h1M387 167.5h6M305 168.5h1M380 168.5h7M305 169.5h1M374 169.5h6M306 170.5h1M368 170.5h6M306 171.5h1M362 171.5h6M306 172.5h1M355 172.5h7M306 173.5h1M349 173.5h6M306 174.5h1M343 174.5h6M306 175.5h1M337 175.5h6M306 176.5h1M331 176.5h6M306 177.5h1M324 177.5h7M306 178.5h1M318 178.5h6M306 179.5h1M312 179.5h6M307 180.5h5"/>
</g>
<g>
<rect x="431" y="85" width="4" height="3" fill="#000"/>
<rect x="446" y="123" width="4" height="4" fill="#000"/>
<rect x="286" y="143" width="4" height="4" fill="#000"/>
<rect x="461" y="160" width="4" height="3" fill="#000"/>
<rect x="477" y="170" width="4" height="4" fill="#000"/>
<rect x="500" y="183" width="4" height="4" fill="#000"/>
<rect x="252" y="173" width="4" height="4" fill="#000"/>
<rect x="290" y="182" width="4" height="4" fill="#000"/>
<rect x="328" y="191" width="4" height="4" fill="#000"/>
<rect x="303" y="206" width="4" height="4" fill="#000"/>
<rect x="413" y="209" width="4" height="4" fill="#000"/>
<rect x="205" y="360" width="4" height="4" fill="#000"/>
<rect x="243" y="366" width="4" height="4" fill="#000"/>
<rect x="269" y="349" width="4" height="4" fill="#000"/>
<rect x="307" y="356" width="4" height="4" fill="#000"/>
<rect x="336" y="338" width="4" height="4" fill="#000"/>
<rect x="373" y="345" width="4" height="4" fill="#000"/>
<rect x="400" y="328" width="4" height="4" fill="#000"/>
<rect x="438" y="334" width="4" height="4" fill="#000"/>
<rect x="71" y="507" width="4" height="4" fill="#000"/>
<rect x="246" y="500" width="4" height="4" fill="#000"/>
<polygon points="475,177 479,177 479,178 477,180 475,179" fill="#000"/>
</g>
<path d="M312 525.5H327M337 525.5H352" stroke="#000" stroke-width="1" fill="none"/>
<rect x="322" y="523" width="1" height="1" fill="#ffffff"/><rect x="322" y="524" width="1" height="1" fill="#f00000"/><rect x="322" y="525" width="1" height="1" fill="#f00000"/><rect x="322" y="526" width="1" height="1" fill="#f00000"/><rect x="322" y="527" width="1" height="1" fill="#f00000"/><rect x="322" y="528" width="1" height="1" fill="#ffffff"/><rect x="323" y="521" width="1" height="1" fill="#ffffff"/><rect x="323" y="522" width="1" height="1" fill="#ffffff"/><rect x="323" y="529" width="1" height="1" fill="#ffffff"/><rect x="323" y="530" width="1" height="1" fill="#ffffff"/><rect x="324" y="520" width="1" height="1" fill="#ffffff"/><rect x="324" y="531" width="1" height="1" fill="#ffffff"/><rect x="325" y="519" width="1" height="1" fill="#f00000"/><rect x="325" y="532" width="1" height="1" fill="#f00000"/><rect x="326" y="518" width="1" height="1" fill="#f00000"/><rect x="326" y="533" width="1" height="1" fill="#f00000"/><rect x="327" y="517" width="1" height="1" fill="#f00000"/><rect x="327" y="534" width="1" height="1" fill="#f00000"/><rect x="328" y="517" width="1" height="1" fill="#ffffff"/><rect x="328" y="534" width="1" height="1" fill="#ffffff"/><rect x="329" y="516" width="1" height="1" fill="#ffffff"/><rect x="329" y="535" width="1" height="1" fill="#ffffff"/><rect x="330" y="516" width="1" height="1" fill="#ffffff"/><rect x="330" y="535" width="1" height="1" fill="#ffffff"/><rect x="331" y="516" width="1" height="1" fill="#ffffff"/><rect x="331" y="535" width="1" height="1" fill="#ffffff"/><rect x="332" y="516" width="1" height="1" fill="#f00000"/><rect x="332" y="535" width="1" height="1" fill="#f00000"/><rect x="333" y="516" width="1" height="1" fill="#f00000"/><rect x="333" y="535" width="1" height="1" fill="#f00000"/><rect x="334" y="516" width="1" height="1" fill="#f00000"/><rect x="334" y="535" width="1" height="1" fill="#f00000"/><rect x="335" y="517" width="1" height="1" fill="#f00000"/><rect x="335" y="534" width="1" height="1" fill="#f00000"/><rect x="336" y="517" width="1" height="1" fill="#ffffff"/><rect x="336" y="534" width="1" height="1" fill="#ffffff"/><rect x="337" y="518" width="1" height="1" fill="#ffffff"/><rect x="337" y="533" width="1" height="1" fill="#ffffff"/><rect x="338" y="519" width="1" height="1" fill="#ffffff"/><rect x="338" y="532" width="1" height="1" fill="#ffffff"/><rect x="339" y="520" width="1" height="1" fill="#f00000"/><rect x="339" y="531" width="1" height="1" fill="#f00000"/><rect x="340" y="521" width="1" height="1" fill="#f00000"/><rect x="340" y="522" width="1" height="1" fill="#f00000"/><rect x="340" y="529" width="1" height="1" fill="#f00000"/><rect x="340" y="530" width="1" height="1" fill="#f00000"/><rect x="341" y="523" width="1" height="1" fill="#f00000"/><rect x="341" y="524" width="1" height="1" fill="#ffffff"/><rect x="341" y="525" width="1" height="1" fill="#ffffff"/><rect x="341" y="526" width="1" height="1" fill="#ffffff"/><rect x="341" y="527" width="1" height="1" fill="#ffffff"/><rect x="341" y="528" width="1" height="1" fill="#f00000"/>
<path d="M332.5 506V521M332.5 531V546" stroke="#000" stroke-width="1" fill="none"/>
<circle cx="332.5" cy="525.5" r="2.7" fill="#e3a050" stroke="#101010" stroke-width="0.9" shape-rendering="auto"/>

</svg>
</body></html>
